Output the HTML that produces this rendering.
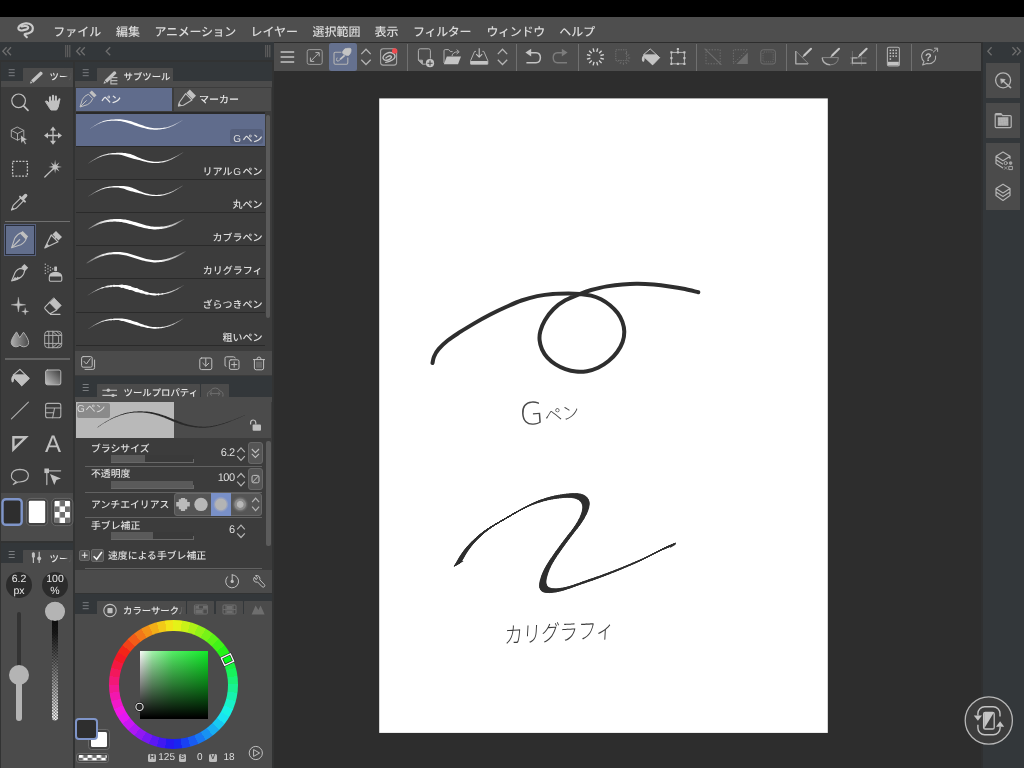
<!DOCTYPE html>
<html lang="ja">
<head>
<meta charset="utf-8">
<title>CLIP STUDIO PAINT</title>
<style>
html,body{margin:0;padding:0;background:#2d2d2d;}
body{-webkit-font-smoothing:antialiased;text-rendering:geometricPrecision;width:1024px;height:768px;overflow:hidden;position:relative;font-family:"Liberation Sans","Noto Sans CJK JP",sans-serif;font-size:10px;font-weight:500;color:#d8d8d8;line-height:1;}
div,span,b,i{position:absolute;box-sizing:border-box;white-space:nowrap;display:block;font-style:normal;font-weight:inherit;}
svg{position:absolute;left:0;top:0;overflow:visible;}
#app{left:0;top:0;width:1024px;height:768px;will-change:transform;}
#status{left:0;top:0;width:1024px;height:17px;background:#000;}
#menubar{left:0;top:17px;width:1024px;height:25px;background:#4e4e4e;}
#menubar span{top:7px;font-size:12px;color:#dadada;line-height:16px;}
#leftdock{left:0;top:42px;width:274px;height:726px;background:#323333;}
.tb{background:#33373a;}
#rightdock{left:981px;top:42px;width:43px;height:726px;background:#33373a;border-left:2px solid #2f3031;}
#cmdbar{left:274px;top:43px;width:707px;height:28px;background:#4d4d4d;}
#work{left:274px;top:71px;width:707px;height:697px;background:#2d2d2d;}
#canvas{left:380px;top:99px;width:447px;height:633px;background:#fff;}
.pal{background:#3c3c3c;}
.tab{background:#4b4b4b;border-radius:0.5px 0.5px 0 0;color:#dcdcdc;height:14px;overflow:hidden;}
.tab span{left:26.6px;top:2.4px;font-size:9.4px;line-height:14px;color:#e4e4e4;}
.strip{background:#4b4b4b;}
em{font-style:normal;margin:0 1.6px 0 0.8px;}
.fade{right:0;top:0;width:9px;height:14px;background:linear-gradient(to right,rgba(75,75,75,0),rgba(75,75,75,0.85) 45%,#4b4b4b 90%);}
.row{left:76px;width:189px;height:32.3px;background:#3c3c3c;}
.row b{right:2.4px;bottom:-1.4px;font-size:10px;color:#dedede;line-height:14px;}
.lbl{font-size:9.85px;color:#dedede;line-height:14px;left:91px;}
.val{font-size:11px;letter-spacing:-0.5px;color:#dedede;line-height:14px;text-align:right;width:40px;left:194.6px;}
.sl{left:111px;width:82.8px;height:7.6px;background:#3a3a3a;border-bottom:1px solid #686868;}
.sl:after{content:'';position:absolute;right:0;bottom:0;width:1px;height:3px;background:#686868;}
.sl i{left:0;top:0;height:6.8px;background:#5a5a5a;}
.btn{background:#555;border-radius:3px;border:1px solid #686868;}
.sep{height:1px;background:#626262;left:85px;width:177px;}
.hsv{font-size:7px;font-weight:bold;color:#4b4b4b;background:#bcbcbc;border-radius:1.5px;width:7.6px;height:7.6px;line-height:7.8px;text-align:center;top:754px;}
.hv{font-size:10px;color:#dedede;line-height:14px;top:751.4px;text-align:right;width:30px;}
</style>
</head>
<body>
<div id="app">
<div id="status"></div>
<div id="menubar"><span style="left:53.3px">ファイル</span><span style="left:116px">編集</span><span style="left:154.6px;letter-spacing:-0.3px">アニメーション</span><span style="left:250.4px">レイヤー</span><span style="left:312.4px">選択範囲</span><span style="left:374.4px">表示</span><span style="left:413px;letter-spacing:-0.3px">フィルター</span><span style="left:486.4px;letter-spacing:-0.3px">ウィンドウ</span><span style="left:559.2px">ヘルプ</span></div>
<div id="leftdock"></div>
<div id="rightdock"></div>
<div id="cmdbar"></div>
<div id="work"></div>
<div class="tb" style="left:0;top:42px;width:274px;height:18.2px;"></div><div class="tb" style="left:0.8px;top:62px;width:72.2px;height:20px;"></div><div class="tb" style="left:0.8px;top:543.4px;width:72.2px;height:20px;"></div><div class="tb" style="left:75px;top:62px;width:197.2px;height:20px;"></div><div class="tb" style="left:75px;top:376.4px;width:197.2px;height:21px;"></div><div class="tb" style="left:75px;top:594.4px;width:197.2px;height:20px;"></div>
<div class="pal" style="left:1px;top:81px;width:72px;height:460px;"></div>
<div class="strip" style="left:1px;top:81px;width:72px;height:6px;"></div>
<div class="strip" style="left:1px;top:493px;width:72px;height:48px;"></div>
<div class="tab" style="left:23px;top:68px;width:50px;"><span>ツール</span><i class="fade"></i></div>
<div class="sep" style="left:5px;top:221px;width:65px;height:1px;background:#707070;"></div>
<div class="sep" style="left:5px;top:358px;width:65px;height:2px;background:#646464;"></div>
<div style="left:4px;top:224px;width:32px;height:32px;background:#626e8c;border:1px solid #57617d;box-shadow:inset 0 0 0 1px #2a2e3a;"></div>
<div class="pal" style="left:1px;top:563px;width:72px;height:205px;background:#4b4b4b;"></div>
<div class="tab" style="left:23px;top:550px;width:50px;"><span>ツール</span><i class="fade"></i></div>
<div style="left:6px;top:571.5px;width:26px;height:26px;border-radius:13px;background:#2b2b2b;"></div><div style="left:42px;top:571.5px;width:26px;height:26px;border-radius:13px;background:#2b2b2b;"></div>
<div style="left:4px;top:574.2px;width:30px;text-align:center;font-size:10.5px;line-height:11.4px;color:#e8e8e8;white-space:normal;">6.2<br>px</div><div style="left:40px;top:574.2px;width:30px;text-align:center;font-size:10.5px;line-height:11.4px;color:#e8e8e8;white-space:normal;">100<br>%</div>
<div style="left:17px;top:612px;width:4px;height:65px;background:#333;border-radius:2px;"></div><div style="left:16px;top:675px;width:6px;height:46px;background:#b4b4b4;border-radius:3px;"></div><div style="left:9.4px;top:665.4px;width:19.2px;height:19.2px;border-radius:10px;background:#b4b4b4;"></div>
<div style="left:45.4px;top:601.7px;width:19.2px;height:19.2px;border-radius:10px;background:#b4b4b4;"></div>
<div class="pal" style="left:75px;top:81px;width:197px;height:295px;"></div>
<div class="strip" style="left:75px;top:81px;width:197px;height:6px;"></div>
<div class="tab" style="left:97px;top:68px;width:76px;"><span>サブツール</span></div>
<div style="left:76px;top:88px;width:96px;height:22.5px;background:#606c8c;"><span style="left:25px;top:5.6px;font-size:10px;line-height:14px;color:#e8e8e8;">ペン</span></div>
<div style="left:174px;top:88px;width:97px;height:22.5px;background:#4b4b4b;"><span style="left:25px;top:5.6px;font-size:10px;line-height:14px;color:#e8e8e8;">マーカー</span></div>
<div style="left:76px;top:112px;width:189px;height:234px;background:#2a2a2a;"></div>
<div class="row" style="top:114px;height:32px;background:#606c8c;"><i style="right:2px;bottom:2px;width:33px;height:15px;border-radius:3px;background:#545e7a;"></i><b><em>G</em>ペン</b></div>
<div class="row" style="top:147px;height:32px;"><b>リアル<em>G</em>ペン</b></div>
<div class="row" style="top:180px;height:32px;"><b>丸ペン</b></div>
<div class="row" style="top:213px;height:32px;"><b>カブラペン</b></div>
<div class="row" style="top:246px;height:32px;"><b>カリグラフィ</b></div>
<div class="row" style="top:279px;height:33px;"><b>ざらつきペン</b></div>
<div class="row" style="top:313px;height:32px;"><b>粗いペン</b></div>
<div style="left:266.3px;top:114.5px;width:3.8px;height:203.6px;background:#5a5a5a;border-radius:2px;"></div>
<div class="strip" style="left:75px;top:351px;width:197px;height:24px;"></div>
<div class="pal" style="left:75px;top:396.5px;width:197px;height:196.5px;"></div>
<div class="tab" style="left:97px;top:383.5px;width:103px;"><span>ツールプロパティ</span></div>
<div class="tab" style="left:201.3px;top:383.5px;width:27.3px;"></div>
<div class="strip" style="left:75px;top:396.5px;width:197px;height:5.5px;"></div>
<div style="left:76px;top:402px;width:97.6px;height:35.8px;background:#b9b9b9;"></div><div style="left:173.6px;top:402px;width:97.4px;height:35.8px;background:#4b4b4b;"></div><div style="left:77px;top:403.4px;width:32.8px;height:14.4px;background:#8a8a8a;border-radius:2px;color:#dcdcdc;font-size:10px;font-weight:400;line-height:13px;padding-left:0;"><em style="margin:0 0.6px 0 0">G</em>ペン</div>
<div class="lbl" style="top:442.8px;">ブラシサイズ</div><div class="sl" style="top:455px;"><i style="width:34px"></i></div><div class="val" style="top:445.8px;">6.2</div><div class="btn" style="left:248.4px;top:442px;width:14.2px;height:22.3px;"></div><div class="sep" style="top:466px;"></div>
<div class="lbl" style="top:468.3px;">不透明度</div><div class="sl" style="top:481px;"><i style="width:82px"></i></div><div class="val" style="top:471.4px;">100</div><div class="btn" style="left:248.4px;top:468.2px;width:14.2px;height:21.5px;"></div><div class="sep" style="top:491.5px;"></div>
<div class="lbl" style="top:499px;">アンチエイリアス</div><div class="btn" style="left:174px;top:493.2px;width:88.4px;height:22.5px;"></div><div style="left:211px;top:493px;width:20px;height:23px;background:#7990c8;"></div><div class="sep" style="top:517px;"></div>
<div class="lbl" style="top:519.8px;">手ブレ補正</div><div class="sl" style="top:532px;"><i style="width:41.7px"></i></div><div class="val" style="top:523px;">6</div>
<div class="btn" style="left:79.4px;top:550.3px;width:11.1px;height:10.4px;border-radius:2px;"></div><div class="btn" style="left:91px;top:548.7px;width:13.2px;height:13.7px;border-radius:2px;"></div><div class="lbl" style="left:108px;top:550.2px;">速度による手ブレ補正</div><div class="sep" style="top:568px;"></div>
<div style="left:266.4px;top:441px;width:4.4px;height:105px;background:#5c5c5c;border-radius:2px;"></div>
<div class="strip" style="left:75px;top:569.6px;width:197px;height:23.4px;"></div>
<div class="pal" style="left:75px;top:614px;width:197px;height:154px;background:#4b4b4b;"></div>
<div class="tab" style="left:97px;top:601.4px;width:88.7px;"><span style="left:26px">カラーサークル</span><i class="fade"></i></div>
<div class="tab" style="left:187.2px;top:601.4px;width:26.8px;"></div><div class="tab" style="left:215.5px;top:601.4px;width:27.5px;"></div><div class="tab" style="left:244.3px;top:601.4px;width:27.7px;"></div>
<div style="left:108.7px;top:620.1px;width:129.4px;height:129.4px;border-radius:50%;background:conic-gradient(from -60deg,#f22518 0.0deg 7.5deg,#f24118 7.5deg 15.0deg,#f25c18 15.0deg 22.5deg,#f27718 22.5deg 30.0deg,#f29218 30.0deg 37.5deg,#f2ae18 37.5deg 45.0deg,#f2c918 45.0deg 52.5deg,#f2e418 52.5deg 60.0deg,#e4f218 60.0deg 67.5deg,#c9f218 67.5deg 75.0deg,#aef218 75.0deg 82.5deg,#92f218 82.5deg 90.0deg,#77f218 90.0deg 97.5deg,#5cf218 97.5deg 105.0deg,#41f218 105.0deg 112.5deg,#25f218 112.5deg 120.0deg,#18f225 120.0deg 127.5deg,#18f241 127.5deg 135.0deg,#18f25c 135.0deg 142.5deg,#18f277 142.5deg 150.0deg,#18f292 150.0deg 157.5deg,#18f2ae 157.5deg 165.0deg,#18f2c9 165.0deg 172.5deg,#18f2e4 172.5deg 180.0deg,#18e4f2 180.0deg 187.5deg,#18c9f2 187.5deg 195.0deg,#18aef2 195.0deg 202.5deg,#1892f2 202.5deg 210.0deg,#1877f2 210.0deg 217.5deg,#185cf2 217.5deg 225.0deg,#1841f2 225.0deg 232.5deg,#1825f2 232.5deg 240.0deg,#2518f2 240.0deg 247.5deg,#4118f2 247.5deg 255.0deg,#5c18f2 255.0deg 262.5deg,#7718f2 262.5deg 270.0deg,#9218f2 270.0deg 277.5deg,#ae18f2 277.5deg 285.0deg,#c918f2 285.0deg 292.5deg,#e418f2 292.5deg 300.0deg,#f218e4 300.0deg 307.5deg,#f218c9 307.5deg 315.0deg,#f218ae 315.0deg 322.5deg,#f21892 322.5deg 330.0deg,#f21877 330.0deg 337.5deg,#f2185c 337.5deg 345.0deg,#f21841 345.0deg 352.5deg,#f21825 352.5deg 360.0deg);"></div><div style="left:119.2px;top:630.6px;width:108.4px;height:108.4px;border-radius:50%;background:#4b4b4b;"></div>
<div style="left:140px;top:651px;width:67.7px;height:67.8px;background:linear-gradient(to bottom,rgba(0,0,0,0.02),rgba(0,0,0,0.5) 50%,#000 98%),linear-gradient(to right,#fff,#a4f7ad 18%,#56f267 48%,#12f02a);"></div>
<div style="left:75.4px;top:718px;width:22.2px;height:22px;border-radius:4px;background:#2e2e2e;border:2.2px solid #7f95c9;z-index:3;"></div><div style="left:87.6px;top:728.6px;width:22px;height:21.6px;border-radius:3.5px;background:#454545;border:1px solid #6a6a6a;"><div style="left:2px;top:2px;width:16px;height:15.6px;background:#fff;border-radius:1.5px;"></div></div><div style="left:76px;top:752.6px;width:33.4px;height:10.6px;border-radius:3px;background:#454545;border:1px solid #6a6a6a;"></div>
<div class="hsv" style="left:148.4px;">H</div><div class="hv" style="left:145px;">125</div><div class="hsv" style="left:178.8px;">S</div><div class="hv" style="left:172.5px;">0</div><div class="hsv" style="left:209px;">V</div><div class="hv" style="left:204.5px;">18</div>
<div style="left:986px;top:63.2px;width:34.2px;height:34.5px;background:#4b4b4b;"></div><div style="left:986px;top:103px;width:34.2px;height:34.7px;background:#4b4b4b;"></div><div style="left:986px;top:143px;width:34.2px;height:66.5px;background:#4b4b4b;"></div>
<div style="left:329px;top:43px;width:28px;height:28px;background:#65718f;border-radius:2.5px;"></div>
<div style="left:406.8px;top:44px;width:1px;height:27px;background:#707070;"></div><div style="left:516.0px;top:44px;width:1px;height:27px;background:#707070;"></div><div style="left:578.0px;top:44px;width:1px;height:27px;background:#707070;"></div><div style="left:696.3px;top:44px;width:1px;height:27px;background:#707070;"></div><div style="left:786.1px;top:44px;width:1px;height:27px;background:#707070;"></div><div style="left:875.9px;top:44px;width:1px;height:27px;background:#707070;"></div><div style="left:910.9px;top:44px;width:1px;height:27px;background:#707070;"></div>
<div id="canvas"></div>
<svg width="1024" height="768" viewBox="0 0 1024 768">
<rect x="379.2" y="98.4" width="448.6" height="634.5" fill="#fff"/>
<path d="M432.5 363.0C432.8 361.9 433.0 359.1 434.0 356.7C435.0 354.3 436.4 351.6 438.8 348.9C441.1 346.2 444.4 343.2 448.0 340.3C451.6 337.4 456.2 334.6 460.6 331.7C465.1 328.8 469.8 326.0 474.7 323.1C479.6 320.2 485.1 317.2 490.3 314.5C495.5 311.8 500.8 309.3 506.0 307.0C511.2 304.7 516.3 302.3 521.5 300.5C526.7 298.7 532.0 297.2 537.2 296.1C542.4 295.0 547.6 294.3 552.8 293.9C558.0 293.4 563.9 293.4 568.4 293.4C572.9 293.4 576.2 293.6 580.0 294.0C583.8 294.4 587.8 294.7 591.2 295.6C594.8 296.5 597.9 297.6 601.0 299.2C604.1 300.8 607.2 302.9 610.0 305.2C612.8 307.5 615.5 310.2 617.6 313.0C619.7 315.8 621.3 318.7 622.4 321.8C623.5 324.9 624.3 328.3 624.3 331.7C624.3 335.1 623.8 338.6 622.6 342.0C621.4 345.4 619.5 348.8 617.2 352.0C614.9 355.2 611.8 358.4 608.6 361.0C605.4 363.6 601.6 366.1 598.0 367.8C594.4 369.5 590.7 370.6 587.0 371.2C583.3 371.8 579.6 371.9 576.0 371.6C572.4 371.3 568.8 370.4 565.4 369.2C562.0 368.0 558.6 366.3 555.6 364.4C552.6 362.5 549.7 360.1 547.4 357.6C545.1 355.1 543.3 352.3 542.0 349.4C540.7 346.5 539.9 343.4 539.6 340.3C539.3 337.2 539.5 334.3 540.4 331.0C541.3 327.7 542.6 324.1 544.8 320.4C547.0 316.7 550.2 312.4 553.6 309.0C557.0 305.6 560.8 302.8 565.3 300.3C569.8 297.8 576.0 295.5 580.3 293.8C584.6 292.0 586.8 291.2 591.2 290.0C595.7 288.8 601.7 287.3 606.9 286.4C612.1 285.5 617.3 284.8 622.5 284.4C627.7 284.0 632.8 283.7 638.0 283.8C643.2 283.8 648.5 284.1 653.8 284.5C659.0 284.9 664.2 285.6 669.4 286.4C674.6 287.1 680.2 288.0 685.0 289.0C689.8 290.0 696.1 291.8 698.3 292.3" fill="none" stroke="#2e2e2e" stroke-width="4" stroke-linecap="round" stroke-linejoin="round"/>
<path d="M454.2 566.2L454.3 566.0L460.7 562.4L460.6 562.6ZM454.3 566.0L454.5 565.7L460.9 562.1L460.7 562.4ZM454.5 565.7L454.7 565.4L461.1 561.8L460.9 562.1ZM454.7 565.4L454.9 565.1L461.3 561.5L461.1 561.8ZM454.9 565.1L455.2 564.7L461.6 561.1L461.3 561.5ZM455.2 564.7L455.5 564.2L461.9 560.6L461.6 561.1ZM455.5 564.2L455.8 563.7L462.2 560.1L461.9 560.6ZM455.8 563.7L456.2 563.0L462.6 559.4L462.2 560.1ZM456.2 563.0L456.7 562.2L463.1 558.6L462.6 559.4ZM456.7 562.2L457.2 561.3L463.6 557.7L463.1 558.6ZM457.2 561.3L457.8 560.3L464.2 556.7L463.6 557.7ZM457.8 560.3L458.4 559.2L464.8 555.6L464.2 556.7ZM458.4 559.2L459.0 558.1L465.4 554.5L464.8 555.6ZM459.0 558.1L459.7 557.0L466.1 553.4L465.4 554.5ZM459.7 557.0L460.4 555.9L466.8 552.3L466.1 553.4ZM460.4 555.9L461.1 554.9L467.4 551.3L466.8 552.3ZM461.1 554.9L461.7 553.9L468.1 550.3L467.4 551.3ZM461.7 553.9L462.4 553.0L468.8 549.4L468.1 550.3ZM462.4 553.0L463.1 552.0L469.5 548.4L468.8 549.4ZM463.1 552.0L463.8 551.0L470.2 547.5L469.5 548.4ZM463.8 551.0L464.5 550.1L470.9 546.5L470.2 547.5ZM464.5 550.1L465.2 549.2L471.6 545.6L470.9 546.5ZM465.2 549.2L466.0 548.3L472.4 544.7L471.6 545.6ZM466.0 548.3L466.7 547.4L473.1 543.8L472.4 544.7ZM466.7 547.4L467.4 546.5L473.8 542.9L473.1 543.8ZM467.4 546.5L468.2 545.7L474.6 542.1L473.8 542.9ZM468.2 545.7L469.0 544.9L475.4 541.3L474.6 542.1ZM469.0 544.9L469.8 544.0L476.2 540.4L475.4 541.3ZM469.8 544.0L470.5 543.2L476.9 539.6L476.2 540.4ZM470.5 543.2L471.3 542.4L477.7 538.8L476.9 539.6ZM471.3 542.4L472.1 541.7L478.5 538.1L477.7 538.8ZM472.1 541.7L472.9 540.9L479.3 537.3L478.5 538.1ZM472.9 540.9L473.7 540.1L480.1 536.5L479.3 537.3ZM473.7 540.1L474.5 539.4L480.9 535.8L480.1 536.5ZM474.5 539.4L475.3 538.7L481.7 535.1L480.9 535.8ZM475.3 538.7L476.1 537.9L482.4 534.3L481.7 535.1ZM476.1 537.9L476.8 537.2L483.2 533.6L482.4 534.3ZM476.8 537.2L477.6 536.5L484.0 532.9L483.2 533.6ZM477.6 536.5L478.4 535.9L484.8 532.3L484.0 532.9ZM478.4 535.9L479.2 535.2L485.6 531.6L484.8 532.3ZM479.2 535.2L480.0 534.6L486.4 531.0L485.6 531.6ZM480.0 534.6L480.8 533.9L487.2 530.3L486.4 531.0ZM480.8 533.9L481.5 533.4L487.9 529.8L487.2 530.3ZM481.5 533.4L482.3 532.8L488.7 529.2L487.9 529.8ZM482.3 532.8L483.1 532.2L489.5 528.6L488.7 529.2ZM483.1 532.2L483.8 531.6L490.2 528.0L489.5 528.6ZM483.8 531.6L484.6 531.1L491.0 527.5L490.2 528.0ZM484.6 531.1L485.4 530.5L491.8 527.0L491.0 527.5ZM485.4 530.5L486.2 530.0L492.6 526.4L491.8 527.0ZM486.2 530.0L486.9 529.5L493.3 525.9L492.6 526.4ZM486.9 529.5L487.7 529.0L494.1 525.4L493.3 525.9ZM487.7 529.0L488.5 528.5L494.9 524.9L494.1 525.4ZM488.5 528.5L489.2 528.0L495.6 524.4L494.9 524.9ZM489.2 528.0L490.0 527.5L496.4 523.9L495.6 524.4ZM490.0 527.5L490.9 527.0L497.3 523.4L496.4 523.9ZM490.9 527.0L491.7 526.5L498.1 522.9L497.3 523.4ZM491.7 526.5L492.6 526.0L499.0 522.4L498.1 522.9ZM492.6 526.0L493.5 525.4L499.9 521.8L499.0 522.4ZM493.5 525.4L494.4 524.9L500.8 521.3L499.9 521.8ZM494.4 524.9L495.4 524.3L501.8 520.7L500.8 521.3ZM495.4 524.3L496.3 523.8L502.7 520.2L501.8 520.7ZM496.3 523.8L497.3 523.2L503.7 519.6L502.7 520.2ZM497.3 523.2L498.2 522.7L504.6 519.1L503.7 519.6ZM498.2 522.7L499.2 522.1L505.6 518.5L504.6 519.1ZM499.2 522.1L500.1 521.6L506.5 518.0L505.6 518.5ZM500.1 521.6L501.1 521.0L507.5 517.4L506.5 518.0ZM501.1 521.0L502.0 520.5L508.4 516.9L507.5 517.4ZM502.0 520.5L503.0 519.9L509.4 516.3L508.4 516.9ZM503.0 519.9L503.9 519.4L510.3 515.8L509.4 516.3ZM503.9 519.4L504.9 518.8L511.3 515.2L510.3 515.8ZM504.9 518.8L505.8 518.3L512.2 514.7L511.3 515.2ZM505.8 518.3L506.8 517.7L513.2 514.1L512.2 514.7ZM506.8 517.7L507.7 517.2L514.1 513.6L513.2 514.1ZM507.7 517.2L508.6 516.6L515.0 513.0L514.1 513.6ZM508.6 516.6L509.5 516.1L515.9 512.5L515.0 513.0ZM509.5 516.1L510.3 515.6L516.7 512.0L515.9 512.5ZM510.3 515.6L511.3 515.0L517.7 511.4L516.7 512.0ZM511.3 515.0L512.3 514.4L518.7 510.8L517.7 511.4ZM518.7 510.8L519.9 510.2L513.5 513.8L512.3 514.4ZM519.9 510.2L521.3 509.4L514.9 513.0L513.5 513.8ZM521.3 509.4L522.9 508.6L516.5 512.2L514.9 513.0ZM522.9 508.6L524.7 507.6L518.3 511.2L516.5 512.2ZM524.7 507.6L526.6 506.6L520.2 510.2L518.3 511.2ZM526.6 506.6L528.7 505.5L522.3 509.1L520.2 510.2ZM528.7 505.5L530.7 504.5L524.3 508.1L522.3 509.1ZM530.7 504.5L532.9 503.4L526.5 507.0L524.3 508.1ZM532.9 503.4L534.9 502.5L528.5 506.1L526.5 507.0ZM534.9 502.5L537.0 501.6L530.5 505.2L528.5 506.1ZM537.0 501.6L538.9 500.8L532.5 504.4L530.5 505.2ZM538.9 500.8L540.9 500.1L534.5 503.7L532.5 504.4ZM540.9 500.1L542.8 499.4L536.4 503.0L534.5 503.7ZM542.8 499.4L544.8 498.8L538.4 502.4L536.4 503.0ZM544.8 498.8L546.7 498.2L540.3 501.8L538.4 502.4ZM546.7 498.2L548.7 497.6L542.3 501.2L540.3 501.8ZM548.7 497.6L550.6 497.1L544.2 500.7L542.3 501.2ZM550.6 497.1L552.6 496.6L546.2 500.2L544.2 500.7ZM552.6 496.6L554.6 496.1L548.2 499.7L546.2 500.2ZM554.6 496.1L556.6 495.7L550.2 499.3L548.2 499.7ZM556.6 495.7L558.7 495.3L552.3 498.9L550.2 499.3ZM558.7 495.3L560.7 495.0L554.3 498.6L552.3 498.9ZM560.7 495.0L562.7 494.7L556.3 498.3L554.3 498.6ZM562.7 494.7L564.6 494.4L558.2 498.0L556.3 498.3ZM564.6 494.4L566.5 494.2L560.1 497.8L558.2 498.0ZM566.5 494.2L568.2 494.0L561.8 497.6L560.1 497.8ZM568.2 494.0L569.8 493.9L563.4 497.5L561.8 497.6ZM569.8 493.9L571.4 493.7L565.0 497.3L563.4 497.5ZM571.4 493.7L572.8 493.7L566.4 497.3L565.0 497.3ZM572.8 493.7L574.2 493.7L567.8 497.3L566.4 497.3ZM574.2 493.7L575.6 493.7L569.2 497.3L567.8 497.3ZM575.6 493.7L576.8 493.7L570.4 497.3L569.2 497.3ZM576.8 493.7L578.0 493.8L571.6 497.4L570.4 497.3ZM578.0 493.8L579.2 494.0L572.8 497.6L571.6 497.4ZM579.2 494.0L580.3 494.2L573.9 497.8L572.8 497.6ZM580.3 494.2L581.3 494.5L574.9 498.1L573.9 497.8ZM581.3 494.5L582.3 494.7L575.9 498.3L574.9 498.1ZM582.3 494.7L583.2 495.1L576.8 498.7L575.9 498.3ZM583.2 495.1L584.0 495.5L577.6 499.1L576.8 498.7ZM584.0 495.5L584.8 495.9L578.4 499.5L577.6 499.1ZM584.8 495.9L585.5 496.4L579.1 500.0L578.4 499.5ZM585.5 496.4L586.2 496.9L579.8 500.6L579.1 500.0ZM586.2 496.9L586.8 497.6L580.4 501.2L579.8 500.6ZM586.8 497.6L587.4 498.2L581.0 501.8L580.4 501.2ZM587.4 498.2L587.8 498.9L581.4 502.5L581.0 501.8ZM587.8 498.9L588.3 499.7L581.9 503.3L581.4 502.5ZM588.3 499.7L588.6 500.5L582.2 504.1L581.9 503.3ZM588.6 500.5L588.9 501.3L582.5 504.9L582.2 504.1ZM588.9 501.3L589.1 502.2L582.7 505.8L582.5 504.9ZM589.1 502.2L589.2 503.2L582.8 506.8L582.7 505.8ZM589.2 503.2L589.2 504.2L582.8 507.8L582.8 506.8ZM589.2 504.2L589.1 505.3L582.7 508.9L582.8 507.8ZM589.1 505.3L588.9 506.4L582.5 510.0L582.7 508.9ZM588.9 506.4L588.7 507.6L582.3 511.2L582.5 510.0ZM588.7 507.6L588.3 508.8L581.9 512.4L582.3 511.2ZM588.3 508.8L587.9 510.1L581.5 513.7L581.9 512.4ZM587.9 510.1L587.5 511.3L581.1 514.9L581.5 513.7ZM587.5 511.3L587.0 512.6L580.5 516.2L581.1 514.9ZM587.0 512.6L586.4 513.9L580.0 517.5L580.5 516.2ZM586.4 513.9L585.7 515.2L579.3 518.8L580.0 517.5ZM585.7 515.2L585.0 516.5L578.6 520.1L579.3 518.8ZM585.0 516.5L584.3 517.9L577.9 521.5L578.6 520.1ZM584.3 517.9L583.5 519.2L577.1 522.8L577.9 521.5ZM583.5 519.2L582.6 520.6L576.2 524.2L577.1 522.8ZM582.6 520.6L581.7 522.1L575.3 525.7L576.2 524.2ZM581.7 522.1L580.7 523.5L574.3 527.1L575.3 525.7ZM580.7 523.5L579.7 525.0L573.3 528.6L574.3 527.1ZM579.7 525.0L578.5 526.5L572.1 530.1L573.3 528.6ZM578.5 526.5L577.4 528.1L571.0 531.7L572.1 530.1ZM577.4 528.1L576.1 529.6L569.7 533.2L571.0 531.7ZM576.1 529.6L574.9 531.2L568.5 534.8L569.7 533.2ZM574.9 531.2L573.6 532.8L567.2 536.4L568.5 534.8ZM573.6 532.8L572.4 534.4L566.0 538.0L567.2 536.4ZM572.4 534.4L571.2 536.0L564.8 539.6L566.0 538.0ZM571.2 536.0L570.0 537.6L563.6 541.2L564.8 539.6ZM570.0 537.6L568.9 539.1L562.5 542.7L563.6 541.2ZM568.9 539.1L567.7 540.6L561.3 544.2L562.5 542.7ZM567.7 540.6L566.6 542.1L560.2 545.7L561.3 544.2ZM566.6 542.1L565.4 543.7L559.0 547.3L560.2 545.7ZM565.4 543.7L564.3 545.3L557.9 548.9L559.0 547.3ZM564.3 545.3L563.1 546.9L556.7 550.5L557.9 548.9ZM563.1 546.9L562.0 548.5L555.5 552.1L556.7 550.5ZM562.0 548.5L560.8 550.2L554.4 553.8L555.5 552.1ZM560.8 550.2L559.5 552.0L553.1 555.6L554.4 553.8ZM559.5 552.0L558.3 553.8L551.9 557.4L553.1 555.6ZM558.3 553.8L557.0 555.6L550.6 559.2L551.9 557.4ZM557.0 555.6L555.8 557.5L549.4 561.1L550.6 559.2ZM555.8 557.5L554.6 559.3L548.2 562.9L549.4 561.1ZM554.6 559.3L553.6 561.0L547.2 564.6L548.2 562.9ZM553.6 561.0L552.6 562.6L546.2 566.2L547.2 564.6ZM552.6 562.6L551.8 564.1L545.4 567.7L546.2 566.2ZM551.8 564.1L551.0 565.6L544.6 569.2L545.4 567.7ZM551.0 565.6L550.3 567.0L543.9 570.6L544.6 569.2ZM550.3 567.0L549.7 568.3L543.3 571.9L543.9 570.6ZM549.7 568.3L549.1 569.7L542.7 573.3L543.3 571.9ZM549.1 569.7L548.6 571.0L542.2 574.6L542.7 573.3ZM548.6 571.0L548.1 572.2L541.7 575.8L542.2 574.6ZM548.1 572.2L547.7 573.5L541.3 577.1L541.7 575.8ZM547.7 573.5L547.3 574.8L540.9 578.4L541.3 577.1ZM547.3 574.8L546.9 576.1L540.5 579.7L540.9 578.4ZM546.9 576.1L546.6 577.3L540.2 580.9L540.5 579.7ZM546.6 577.3L546.3 578.6L539.9 582.2L540.2 580.9ZM546.3 578.6L546.1 579.8L539.7 583.4L539.9 582.2ZM546.1 579.8L546.0 580.9L539.6 584.5L539.7 583.4ZM546.0 580.9L545.9 581.9L539.5 585.5L539.6 584.5ZM545.9 581.9L546.0 582.9L539.6 586.5L539.5 585.5ZM546.0 582.9L546.1 583.8L539.7 587.4L539.6 586.5ZM546.1 583.8L546.4 584.6L540.0 588.2L539.7 587.4ZM546.4 584.6L546.7 585.3L540.3 588.9L540.0 588.2ZM546.7 585.3L547.0 586.0L540.6 589.6L540.3 588.9ZM547.0 586.0L547.5 586.6L541.1 590.2L540.6 589.6ZM547.5 586.6L548.1 587.1L541.7 590.7L541.1 590.2ZM548.1 587.1L548.7 587.6L542.3 591.2L541.7 590.7ZM548.7 587.6L549.5 588.0L543.0 591.6L542.3 591.2ZM549.5 588.0L550.3 588.3L543.9 591.9L543.0 591.6ZM550.3 588.3L551.3 588.6L544.9 592.2L543.9 591.9ZM551.3 588.6L552.4 588.7L546.0 592.3L544.9 592.2ZM552.4 588.7L553.6 588.8L547.2 592.4L546.0 592.3ZM553.6 588.8L554.8 588.9L548.4 592.5L547.2 592.4ZM554.8 588.9L556.1 588.9L549.7 592.5L548.4 592.5ZM556.1 588.9L557.4 588.8L551.0 592.4L549.7 592.5ZM557.4 588.8L558.8 588.7L552.4 592.3L551.0 592.4ZM558.8 588.7L560.2 588.5L553.8 592.1L552.4 592.3ZM560.2 588.5L561.6 588.3L555.2 591.9L553.8 592.1ZM561.6 588.3L563.1 588.1L556.7 591.7L555.2 591.9ZM563.1 588.1L564.6 587.7L558.2 591.3L556.7 591.7ZM564.6 587.7L566.2 587.4L559.8 591.0L558.2 591.3ZM566.2 587.4L567.8 587.0L561.4 590.6L559.8 591.0ZM567.8 587.0L569.5 586.5L563.1 590.1L561.4 590.6ZM569.5 586.5L571.2 586.0L564.8 589.6L563.1 590.1ZM571.2 586.0L573.0 585.4L566.6 589.0L564.8 589.6ZM573.0 585.4L574.9 584.8L568.5 588.4L566.6 589.0ZM574.9 584.8L576.9 584.1L570.5 587.7L568.5 588.4ZM576.9 584.1L578.9 583.4L572.5 587.0L570.5 587.7ZM578.9 583.4L580.9 582.7L574.5 586.3L572.5 587.0ZM580.9 582.7L582.9 581.9L576.5 585.5L574.5 586.3ZM582.9 581.9L585.0 581.2L578.6 584.8L576.5 585.5ZM585.0 581.2L587.0 580.5L580.5 584.1L578.6 584.8ZM587.0 580.5L588.9 579.8L582.5 583.4L580.5 584.1ZM588.9 579.8L590.8 579.2L584.4 582.8L582.5 583.4ZM590.8 579.2L592.7 578.5L586.3 582.1L584.4 582.8ZM592.7 578.5L594.6 577.9L588.2 581.5L586.3 582.1ZM594.6 577.9L596.5 577.2L590.1 580.8L588.2 581.5ZM596.5 577.2L598.5 576.6L592.1 580.2L590.1 580.8ZM598.5 576.6L600.5 575.9L594.1 579.5L592.1 580.2ZM600.5 575.9L602.6 575.1L596.2 578.7L594.1 579.5ZM602.6 575.1L604.7 574.3L598.3 577.9L596.2 578.7ZM604.7 574.3L606.9 573.5L600.5 577.1L598.3 577.9ZM606.9 573.5L609.1 572.7L602.7 576.3L600.5 577.1ZM609.1 572.7L611.4 571.8L605.0 575.4L602.7 576.3ZM611.4 571.8L613.7 571.0L607.3 574.6L605.0 575.4ZM613.7 571.0L616.1 570.0L609.7 573.6L607.3 574.6ZM616.1 570.0L618.6 569.0L612.2 572.6L609.7 573.6ZM618.6 569.0L621.2 568.0L614.8 571.6L612.2 572.6ZM621.2 568.0L623.9 566.9L617.5 570.5L614.8 571.6ZM623.9 566.9L626.8 565.7L620.4 569.3L617.5 570.5ZM626.8 565.7L629.8 564.4L623.4 568.0L620.4 569.3ZM629.8 564.4L632.9 563.1L626.5 566.7L623.4 568.0ZM632.9 563.1L636.0 561.8L629.6 565.4L626.5 566.7ZM636.0 561.8L639.0 560.5L632.6 564.1L629.6 565.4ZM639.0 560.5L642.0 559.2L635.6 562.8L632.6 564.1ZM642.0 559.2L644.8 557.9L638.4 561.5L635.6 562.8ZM644.8 557.9L647.6 556.6L641.2 560.2L638.4 561.5ZM647.6 556.6L650.3 555.2L643.9 558.8L641.2 560.2ZM650.3 555.2L653.1 553.8L646.7 557.4L643.9 558.8ZM653.1 553.8L655.8 552.5L649.4 556.1L646.7 557.4ZM655.8 552.5L658.3 551.1L651.9 554.7L649.4 556.1ZM658.3 551.1L660.8 549.9L654.4 553.5L651.9 554.7ZM660.8 549.9L663.0 548.7L656.6 552.3L654.4 553.5ZM663.0 548.7L665.1 547.7L658.7 551.3L656.6 552.3ZM665.1 547.7L667.0 546.8L660.6 550.4L658.7 551.3ZM667.0 546.8L668.7 546.0L662.3 549.6L660.6 550.4ZM668.7 546.0L670.3 545.4L663.9 549.0L662.3 549.6ZM670.3 545.4L671.7 544.8L665.3 548.4L663.9 549.0ZM671.7 544.8L673.0 544.2L666.6 547.8L665.3 548.4ZM673.0 544.2L674.1 543.8L667.7 547.4L666.6 547.8ZM674.1 543.8L675.0 543.4L668.6 547.0L667.7 547.4ZM675.0 543.4L675.8 543.1L669.4 546.7L668.6 547.0Z" fill="#2e2e2e" stroke="#2e2e2e" stroke-width="0.9" stroke-linejoin="round"/>
<path d="M459.4 563.4L463.6 561.3L461 560.4ZM668.4 545.8L675.8 543L675.5 544.7L670.4 547.7Z" fill="#2e2e2e"/>
<text x="519.4" y="424.6" font-family="'DejaVu Sans','Liberation Sans',sans-serif" font-weight="200" font-size="31" fill="#4a4a4a" transform="rotate(-4 530 414)">G</text>
<text x="544.5" y="420.4" font-family="'Liberation Sans','Noto Sans CJK JP',sans-serif" font-weight="200" font-size="17.5" fill="#444" transform="rotate(-8 560 414)">ペン</text>
<text x="0" y="0" font-family="'Liberation Sans','Noto Sans CJK JP',sans-serif" font-weight="200" font-size="18.4" fill="#3c3c3c" transform="translate(504 643.4) rotate(-3) skewX(-6) scale(1 1.22)">カリグラフィ</text>
<g fill="none" stroke="#c0c0c0" stroke-width="1.2" stroke-linecap="round" stroke-linejoin="round">
<circle cx="18.6" cy="100.8" r="6.8"/><path d="M23.6 105.8L28 110.3" stroke-width="1.7"/>
<path d="M50 103V97.2M53 102V95.8M55.9 102.5V96.6M58 104L59.4 99.2" stroke-width="2.1"/><path d="M45.6 101.2Q46.6 100.4 48 101.8L50 104.2V101H58.6L59 103Q58.6 107.5 56.6 110H51Q49.6 108.4 48.6 106.6Z" fill="#c0c0c0" stroke-width="1"/>
<path d="M17.5 127.2L23.8 130.4V137L17.5 140.2L11.3 137V130.4ZM11.3 130.4L17.5 133.6L23.8 130.4M17.5 133.6V140.2" stroke-width="1" stroke="#a8a8a8"/>
<path d="M20.8 135.2L27.4 139.6L24.6 140.4L26.4 143.8L24.9 144.6L23.1 141.2L21.1 143.3Z" fill="#c0c0c0" stroke="#3c3c3c" stroke-width="0.6"/>
<path d="M53 129V142M46.5 135.5H59.5" stroke-width="1.3"/><path d="M53 126.4L56 130.4H50ZM53 144.8L56 140.8H50ZM44 135.5L48 132.5V138.5ZM62 135.5L58 132.5V138.5Z" fill="#c0c0c0" stroke="none"/>
<rect x="12.6" y="161.3" width="14.8" height="14.8" stroke-dasharray="2 1.3" stroke-linecap="butt" stroke-width="1.3"/>
<path d="M44.8 177L53.6 168.4" stroke-width="1.3"/>
<path d="M55.1 159.8L55.9 164.9L59.4 162.3L57.2 166.1L62 166.9L57.2 167.7L59.4 171.5L55.9 168.9L55.1 173.6L54.3 168.9L50.8 171.5L53 167.7L48.4 166.9L53 166.1L50.8 162.3L54.3 164.9Z" fill="#c0c0c0" stroke="none"/>
<path d="M11.5 210.1L13.2 205.4L20.8 197.8L23.7 200.7L16.1 208.3Z" stroke-width="1.1"/><path d="M11.3 210.3L12.6 207.2L14.4 209Z" fill="#c0c0c0" stroke="none"/>
<path d="M20 196.6L25 201.6" stroke-width="2"/><path d="M23 198.2L25.6 195.6" stroke-width="3.6"/>
<path d="M11.6 247.8L14.6 238.6Q17 234.2 21.6 232.6L26.6 237.6Q25.2 242.4 20.8 244.8Z" stroke-width="1.1"/><path d="M12 247.4L19.6 239.8" stroke-width="1.3"/><path d="M22.6 231L28.2 236.6L25.6 239.2L20 233.6Z" fill="#c0c0c0" stroke="none"/>
<path d="M44.8 248L51.2 235L58 241.8Z" stroke-width="1.2"/><path d="M44.8 248L47 243.6L49.2 245.8Z" fill="#c0c0c0" stroke="none"/><path d="M52.4 234.6L56 231L62 237L58.4 240.6L56.6 238.2L55.4 239L54.6 236.4Z" fill="#c0c0c0" stroke="none"/>
<path d="M11.6 281L14.4 274.2Q15.4 270.2 19.8 268.4Q23.2 268.4 24.6 270.2Q24.4 274.4 21 277.2Q16.4 280.4 11.6 281Z" stroke-width="1.1"/><path d="M11.6 281L15 277L16.4 278L17.8 276.6L19 277.8L20.4 276.4L21.4 277.2Q16.8 280.6 11.6 281Z" fill="#c0c0c0" stroke="none"/><path d="M21.2 267.2L24.4 264L28.2 267.8L25 271Z" fill="#c0c0c0" stroke="none"/>
<path d="M50.4 281.2Q49.3 281.2 49.3 280V277Q49.6 272.6 55.6 272.4Q61.6 272.6 61.8 277V280Q61.8 281.2 60.7 281.2Z" stroke-width="1.1"/><rect x="50.6" y="277.4" width="9.9" height="2" fill="#3c3c3c" stroke="none"/><path d="M49.5 276.6Q50 272.8 55.6 272.6Q61.2 272.8 61.6 276.6Z" fill="#c0c0c0" stroke="none"/><rect x="54.2" y="266.4" width="2.8" height="4.6" rx="0.6" fill="#c0c0c0" stroke="none"/>
<g fill="#a8a8a8" stroke="none"><rect x="44.7" y="263.6" width="1.3" height="1.3"/><rect x="44.7" y="266.8" width="1.3" height="1.3"/><rect x="44.7" y="269.8" width="1.3" height="1.3"/><rect x="44.7" y="272.8" width="1.3" height="1.3"/><rect x="47.3" y="265.2" width="1.3" height="1.3"/><rect x="47.3" y="268.2" width="1.3" height="1.3"/><rect x="47.3" y="271.2" width="1.3" height="1.3"/><rect x="49.8" y="266.8" width="1.3" height="1.3"/><rect x="49.8" y="269.6" width="1.3" height="1.3"/><rect x="52" y="268.2" width="1.3" height="1.3"/></g>
<path d="M18.4 297.6L19.45 303.75L25.6 304.8L19.45 305.85L18.4 312.0L17.35 305.85L11.2 304.8L17.35 303.75Z" fill="#c0c0c0" stroke="#c0c0c0" stroke-width="0.4" stroke-linejoin="round"/><path d="M25.2 308.0L25.95 310.75L28.7 311.5L25.95 312.25L25.2 315.0L24.45 312.25L21.7 311.5L24.45 310.75Z" fill="#c0c0c0" stroke="#c0c0c0" stroke-width="0.3" stroke-linejoin="round"/>
<path d="M54 298L61.2 305.4L56.6 310L49.4 302.6Z" fill="#c0c0c0" stroke="#c0c0c0" stroke-width="0.8"/><path d="M49.4 302.6L45.2 306.8Q44.2 308 45.2 309.2L49 313Q50.2 314 51.4 313L56.6 310" stroke-width="1.1"/><path d="M50.4 314.3H60" stroke-width="1.2"/>
<defs><linearGradient id="gb" x1="0" x2="1" y1="0" y2="0"><stop offset="0" stop-color="#b0b0b0"/><stop offset="1" stop-color="#4a4a4a"/></linearGradient></defs>
<path d="M16.3 332.2Q11.2 339 11.2 342.4Q11.6 346.6 16 346.8Q18.6 346.8 19.9 345Q21.2 346.8 23.8 346.8Q28.4 346.6 28.6 342.4Q28.6 339 23.5 332.2L19.9 337.4Z" fill="url(#gb)" stroke="#b0b0b0" stroke-width="1"/>
<g stroke="#ababab" stroke-width="1"><rect x="44.7" y="331.3" width="17" height="16.4" rx="3"/><path d="M48.8 331.3V347.7M52.8 331.3V347.7M44.7 335.4H61.7M44.7 343.4H61.7M52.8 331.6L58.6 336.6V342.4L52.8 347.4M56.4 331.4L61.6 335.6M56.4 347.6L61.6 343.4"/></g>
<path d="M13.4 374.8L19.9 369.3L29.1 378.4L21.7 385.6Z" stroke-width="1.1"/><path d="M13.6 374.8H25.6L29.1 378.4L21.7 385.6L14 378Z" fill="#c0c0c0" stroke="#c0c0c0" stroke-width="0.8"/><path d="M14.6 374.6Q11.4 375.6 11.2 379.6Q11.4 382.4 12.6 382.4Q13.8 382.4 14 380V376Z" fill="#c0c0c0" stroke="none"/>
<defs><linearGradient id="gg" x1="0" x2="1" y1="1" y2="0"><stop offset="0" stop-color="#c4c4c4"/><stop offset="1" stop-color="#3a3a3a"/></linearGradient></defs>
<rect x="45.6" y="370" width="15.2" height="14.8" rx="1.8" fill="url(#gg)" stroke="#b8b8b8" stroke-width="1"/>
<path d="M11.4 418.9L28.4 402.1" stroke-width="1.1" stroke="#b0b0b0"/>
<g stroke="#b0b0b0" stroke-width="1.1"><rect x="45.6" y="403.4" width="15.2" height="14.4" rx="2"/><path d="M45.6 408H60.8M45.6 412.7H53.8M54.6 408L52.6 417.8"/></g>
<path d="M12.2 436H28.8L12.2 452.3ZM14.6 438.4V446.6L23 438.4Z" fill="#c0c0c0" fill-rule="evenodd" stroke="none"/>
<path d="M16.2 481.4Q11.2 479.6 11.4 475.6Q12 469.6 19.9 469.4Q28 469.6 28.4 475.6Q28 481.4 19.6 482Q18.4 482 18 482L13.2 484.6Z" stroke-width="1.1" stroke="#b8b8b8"/>
<path d="M46.8 471V484.6M48 470.8H60.6" stroke-width="1.3" stroke="#b0b0b0"/><rect x="44.4" y="468.5" width="4.6" height="4.6" fill="#c0c0c0" stroke="none"/><path d="M50 474L61 478.4L56.4 480L54.3 485Z" fill="#c0c0c0" stroke="none"/>
</g>
<text x="53.1" y="452.3" text-anchor="middle" font-family="'Liberation Sans',sans-serif" font-size="24" fill="#c0c0c0">A</text>
<rect x="2.5" y="499.2" width="19.2" height="25.6" rx="3.4" fill="#2e2e2e" stroke="#7f95c9" stroke-width="2.4"/>
<rect x="26.4" y="498.4" width="21.3" height="27.2" rx="4.4" fill="#434343" stroke="#6c6c6c" stroke-width="0.9"/><rect x="28.8" y="500.8" width="16.4" height="22.3" rx="1.4" fill="#fff"/>
<rect x="51.7" y="498.4" width="21.2" height="27.2" rx="4.4" fill="#434343" stroke="#6c6c6c" stroke-width="0.9"/>
<defs><pattern id="ck" x="54.4" y="500.8" width="10.6" height="11.2" patternUnits="userSpaceOnUse"><rect width="10.6" height="11.2" fill="#fff"/><rect x="5.3" width="5.3" height="5.6" fill="#707070"/><rect y="5.6" width="5.3" height="5.6" fill="#707070"/></pattern></defs>
<rect x="54.4" y="500.8" width="15.8" height="22.3" rx="1.4" fill="url(#ck)"/>
<path d="M21.6 26.5C22.1 26.4 23.5 26.1 24.4 26.0C25.3 26.0 26.3 25.9 27.0 26.2C27.6 26.5 28.3 27.2 28.2 27.7C28.2 28.2 27.5 28.9 26.8 29.3C26.0 29.7 24.5 30.0 23.5 30.2C22.4 30.4 21.4 30.7 20.6 30.4C19.7 30.2 18.8 29.5 18.5 28.9C18.2 28.2 18.4 27.3 18.9 26.6C19.4 25.8 20.4 25.0 21.6 24.4C22.7 23.9 24.6 23.5 25.8 23.4C27.1 23.3 28.1 23.4 29.1 23.7C30.1 24.1 31.3 24.8 31.9 25.6C32.5 26.4 32.9 27.4 32.8 28.4C32.8 29.4 32.4 30.7 31.7 31.5C31.0 32.3 29.8 32.8 28.6 33.2C27.4 33.7 24.8 33.7 24.5 34.4C24.2 35.0 26.4 36.7 26.8 37.2" fill="none" stroke="#cccccc" stroke-width="2.2" stroke-linecap="round" stroke-linejoin="round"/>
<g fill="none" stroke="#6e6e6e" stroke-width="1.3">
<path d="M6.6 47.2L2.8 51.2L6.6 55.2M11 47.2L7.2 51.2L11 55.2"/>
<path d="M65.7 45V57.2M67.6 45V57.2M69.8 45V57.2" stroke="#5e5e5e" stroke-width="1.2"/>
<path d="M80.4 47.2L76.6 51.2L80.4 55.2M84.8 47.2L81 51.2L84.8 55.2"/>
<path d="M110.2 47.2L106.2 51.2L110.2 55.2"/>
<path d="M265.7 45V57.2M267.6 45V57.2M269.8 45V57.2" stroke="#5e5e5e" stroke-width="1.2"/>
<path d="M991.6 47.2L987.8 51.2L991.6 55.2"/>
<path d="M1012.4 47.2L1016.2 51.2L1012.4 55.2M1016.8 47.2L1020.6 51.2L1016.8 55.2"/>
</g>
<path d="M8.7 69.7h6M8.7 72.7h6M8.7 75.7h6" stroke="#7a7d80" stroke-width="1" fill="none"/>
<path d="M82.7 69.7h6M82.7 72.7h6M82.7 75.7h6" stroke="#7a7d80" stroke-width="1" fill="none"/>
<path d="M82.7 384.5h6M82.7 387.5h6M82.7 390.5h6" stroke="#7a7d80" stroke-width="1" fill="none"/>
<path d="M8.7 551.5h6M8.7 554.5h6M8.7 557.5h6" stroke="#7a7d80" stroke-width="1" fill="none"/>
<path d="M82.7 602.7h6M82.7 605.7h6M82.7 608.7h6" stroke="#7a7d80" stroke-width="1" fill="none"/>
<path d="M33.4 82.7L42.7 74.0Q42.8 71.7 40.5 71.6L31.1 80.2ZM29.9 83.6L32.6 82.9L30.8 81.0Z" fill="#c2c2c2"/>
<path d="M107.0 82.7L116.4 73.6Q116.4 71.2 114.0 71.2L104.7 80.3ZM103.5 83.8L106.2 83.0L104.3 81.1Z" fill="#c2c2c2"/>
<path d="M110.8 77.7H117.4M110.8 80.7H117.4M110.8 83.9H117.4M110.9 77.2V84.4" stroke="#b8b8b8" stroke-width="1.2" fill="none"/>
<path d="M102.4 390.2H117M102.4 395.4H117" stroke="#c0c0c0" stroke-width="1.1" fill="none"/><circle cx="108.3" cy="390.2" r="1.7" fill="#c0c0c0"/><circle cx="113" cy="395.4" r="1.7" fill="#c0c0c0"/>
<path d="M207.6 396.6Q206.6 392 210.6 391Q212 387.6 215.4 388Q218.6 388 220 391Q224 392 222.8 396.6" stroke="#6e6e6e" stroke-width="1" fill="none"/><path d="M210 393.6H220M218 391.6L220.2 393.6L218 395.6M212 391.6L209.8 393.6L212 395.6" stroke="#6e6e6e" stroke-width="1" fill="none"/>
<path d="M33.4 552.4V563M39.2 551.8V563" stroke="#c0c0c0" stroke-width="1.2" fill="none"/><rect x="31.9" y="552.4" width="3" height="5.2" rx="1.2" fill="#c0c0c0"/><circle cx="39.2" cy="558.6" r="2" fill="#c0c0c0"/>
<circle cx="110" cy="610.6" r="6.2" fill="none" stroke="#c0c0c0" stroke-width="1.1"/><rect x="107.4" y="608" width="5.2" height="5.2" rx="0.8" fill="#c0c0c0"/>
<g fill="none" stroke="#6e6e6e" stroke-width="1"><rect x="194.4" y="605" width="13" height="9" rx="1"/><path d="M194.4 609H207.4M198.6 605V609M202.8 609V614" /><rect x="195.4" y="606" width="3" height="2.6" fill="#6e6e6e" stroke="none"/><rect x="203" y="606" width="4" height="2.6" fill="#6e6e6e" stroke="none"/><rect x="195.4" y="610" width="7" height="3.4" fill="#6e6e6e" stroke="none"/><rect x="223" y="605" width="13" height="9" rx="1"/><path d="M226 605V614M233 605V614M223 609.6H236"/><rect x="226.6" y="606" width="5.8" height="3" fill="#6e6e6e" stroke="none"/><rect x="226.6" y="610.4" width="5.8" height="3" fill="#6e6e6e" stroke="none"/><path d="M251.6 614.4L255.6 605.4L258.4 610L260.6 605.4L264.6 614.4Z" fill="#6e6e6e" stroke="none"/></g>
<g fill="none" stroke="#c0c0c0" stroke-width="1" stroke-linejoin="round"><path d="M80 107L82.4 99.4Q84.4 95.6 88.4 94.2L92.8 98.6Q91.4 102.6 87.6 104.6Z"/><path d="M80.4 106.6L86.6 100.4"/><path d="M89.4 92.8L94.2 97.6L96.6 95.2L91.8 90.4Z" fill="#c0c0c0" stroke="none"/></g>
<g fill="none" stroke="#c0c0c0" stroke-width="1.1" stroke-linejoin="round"><path d="M178.4 106L179.4 102.2L185.6 93.6L192 100L183.4 105.2Z"/><path d="M178 106.6L179 103L181.6 105.6Z" fill="#c0c0c0" stroke="none"/><path d="M186.4 93L189.8 89.6L194 93.8L196 95.8L192.6 99.2Z" fill="#c0c0c0" stroke="none"/></g>
<defs><linearGradient id="wg" gradientUnits="userSpaceOnUse" x1="87" y1="0" x2="186" y2="0"><stop offset="0" stop-color="#fff" stop-opacity="0.2"/><stop offset="0.16" stop-color="#fff" stop-opacity="0.85"/><stop offset="0.3" stop-color="#fff"/><stop offset="0.72" stop-color="#fff"/><stop offset="0.9" stop-color="#fff" stop-opacity="0.6"/><stop offset="1" stop-color="#fff" stop-opacity="0.12"/></linearGradient></defs>
<path d="M90.1 128.7L91.3 128.0L92.5 127.3L93.6 126.6L94.7 126.0L95.7 125.4L96.8 124.8L97.7 124.3L98.7 123.8L99.7 123.4L100.6 123.0L101.6 122.6L102.5 122.3L103.5 122.0L104.5 121.8L105.5 121.5L106.5 121.3L107.6 121.1L108.8 121.0L110.0 120.9L111.2 120.8L112.6 120.8L114.0 120.7L115.4 120.7L117.0 120.8L118.6 120.9L120.2 121.1L121.7 121.3L123.3 121.7L124.8 122.1L126.4 122.5L128.0 123.0L129.6 123.5L131.1 124.1L132.7 124.6L134.3 125.2L135.9 125.7L137.5 126.2L139.2 126.7L140.8 127.2L142.5 127.7L144.1 128.1L145.8 128.5L147.4 128.9L149.1 129.2L150.7 129.4L152.4 129.6L154.0 129.7L155.7 129.7L157.2 129.7L158.5 129.6L159.9 129.5L161.2 129.3L162.5 129.1L163.7 128.9L164.8 128.7L166.0 128.4L167.1 128.1L168.2 127.8L169.3 127.4L170.3 127.0L171.3 126.6L172.4 126.2L173.4 125.7L174.4 125.2L175.4 124.7L176.4 124.1L177.4 123.5L178.4 122.9L179.5 122.3L180.5 121.7L181.6 121.0L182.7 120.3L182.5 120.1L181.4 120.7L180.3 121.3L179.2 121.9L178.2 122.5L177.1 123.1L176.1 123.6L175.1 124.1L174.1 124.6L173.1 125.0L172.1 125.4L171.0 125.8L170.0 126.2L169.0 126.6L167.9 126.9L166.9 127.2L165.8 127.4L164.6 127.6L163.5 127.8L162.3 128.0L161.1 128.1L159.8 128.2L158.5 128.3L157.1 128.3L155.7 128.3L154.1 128.2L152.5 128.1L151.0 127.8L149.4 127.5L147.8 127.1L146.2 126.7L144.7 126.2L143.1 125.6L141.5 125.1L139.9 124.5L138.4 123.9L136.8 123.3L135.2 122.7L133.6 122.2L131.9 121.6L130.3 121.1L128.6 120.7L127.0 120.3L125.3 120.0L123.7 119.7L122.0 119.4L120.3 119.3L118.7 119.2L117.0 119.2L115.4 119.3L113.9 119.4L112.5 119.5L111.1 119.6L109.9 119.7L108.6 119.9L107.5 120.1L106.3 120.3L105.3 120.5L104.2 120.8L103.2 121.1L102.2 121.5L101.3 121.9L100.3 122.3L99.4 122.7L98.4 123.2L97.4 123.7L96.5 124.3L95.5 124.9L94.4 125.5L93.4 126.2L92.3 126.9L91.1 127.7L89.9 128.5Z" fill="url(#wg)" opacity="1"/>
<path d="M88.4 163.4L89.6 162.7L90.8 162.0L92.0 161.3L93.1 160.6L94.3 160.0L95.3 159.4L96.4 158.8L97.5 158.3L98.5 157.8L99.6 157.3L100.6 156.9L101.7 156.5L102.8 156.1L103.9 155.8L105.0 155.5L106.1 155.2L107.3 155.0L108.5 154.8L109.8 154.6L111.1 154.5L112.5 154.4L113.9 154.4L115.4 154.4L117.0 154.4L118.6 154.6L120.1 154.8L121.7 155.1L123.2 155.6L124.8 156.1L126.3 156.6L127.8 157.1L129.4 157.6L131.0 158.1L132.6 158.5L134.2 158.9L135.9 159.3L137.6 159.7L139.2 160.1L140.9 160.6L142.5 161.0L144.2 161.4L145.8 161.8L147.4 162.2L149.1 162.5L150.7 162.7L152.4 162.9L154.0 163.1L155.7 163.1L157.2 163.0L158.6 163.0L159.9 162.8L161.3 162.6L162.5 162.4L163.8 162.2L165.0 161.9L166.2 161.5L167.3 161.2L168.5 160.8L169.6 160.3L170.6 159.8L171.7 159.4L172.8 158.8L173.8 158.3L174.8 157.7L175.9 157.1L176.9 156.5L177.9 155.9L179.0 155.3L180.0 154.6L181.1 153.9L182.2 153.2L183.3 152.5L183.1 152.3L182.0 152.9L180.9 153.5L179.8 154.2L178.7 154.8L177.6 155.4L176.6 156.0L175.5 156.5L174.5 157.1L173.4 157.6L172.4 158.1L171.3 158.6L170.3 159.0L169.2 159.4L168.1 159.8L167.0 160.2L165.9 160.5L164.7 160.8L163.5 161.0L162.3 161.2L161.1 161.4L159.8 161.6L158.5 161.7L157.1 161.7L155.7 161.7L154.1 161.7L152.5 161.5L150.9 161.3L149.4 161.0L147.8 160.7L146.2 160.2L144.6 159.8L143.0 159.3L141.5 158.7L139.9 158.0L138.4 157.4L136.8 156.7L135.3 156.0L133.7 155.3L132.1 154.7L130.5 154.1L128.8 153.7L127.1 153.4L125.4 153.1L123.7 152.9L122.0 152.8L120.3 152.7L118.7 152.7L117.0 152.8L115.4 152.9L113.9 153.0L112.4 153.1L111.0 153.2L109.6 153.4L108.3 153.6L107.1 153.9L105.9 154.2L104.7 154.5L103.6 154.8L102.5 155.2L101.4 155.6L100.3 156.1L99.2 156.5L98.2 157.1L97.1 157.6L96.1 158.2L95.0 158.8L93.9 159.4L92.8 160.1L91.7 160.8L90.6 161.6L89.4 162.4L88.2 163.2Z" fill="url(#wg)" opacity="1"/>
<path d="M88.4 196.5L89.6 195.8L90.8 195.0L92.0 194.4L93.1 193.7L94.2 193.1L95.3 192.5L96.4 191.9L97.5 191.4L98.5 190.9L99.6 190.4L100.6 190.0L101.7 189.6L102.8 189.2L103.9 188.9L105.0 188.6L106.1 188.3L107.3 188.1L108.5 187.9L109.8 187.7L111.1 187.6L112.5 187.5L113.9 187.4L115.4 187.4L117.0 187.5L118.6 187.6L120.1 187.9L121.7 188.2L123.2 188.6L124.8 189.1L126.3 189.7L127.8 190.2L129.4 190.7L131.0 191.2L132.6 191.6L134.3 192.0L135.9 192.4L137.6 192.8L139.2 193.2L140.9 193.6L142.5 194.0L144.2 194.5L145.8 194.9L147.4 195.2L149.1 195.5L150.7 195.8L152.4 196.0L154.0 196.1L155.7 196.1L157.2 196.1L158.6 196.0L159.9 195.9L161.3 195.7L162.5 195.5L163.8 195.2L165.0 194.9L166.2 194.6L167.3 194.2L168.4 193.8L169.5 193.4L170.6 192.9L171.7 192.4L172.8 191.9L173.8 191.4L174.8 190.8L175.9 190.2L176.9 189.6L177.9 189.0L179.0 188.3L180.0 187.7L181.1 187.0L182.2 186.3L183.3 185.6L183.1 185.4L182.0 186.0L180.9 186.6L179.8 187.3L178.7 187.9L177.7 188.5L176.6 189.1L175.5 189.6L174.5 190.2L173.5 190.7L172.4 191.2L171.4 191.7L170.3 192.1L169.2 192.5L168.1 192.9L167.0 193.3L165.9 193.6L164.7 193.9L163.6 194.2L162.3 194.4L161.1 194.6L159.8 194.7L158.5 194.8L157.1 194.9L155.7 194.9L154.1 194.8L152.5 194.7L150.9 194.4L149.4 194.2L147.8 193.8L146.2 193.4L144.6 192.9L143.0 192.4L141.5 191.8L139.9 191.2L138.3 190.5L136.8 189.8L135.2 189.1L133.7 188.4L132.1 187.8L130.4 187.3L128.8 186.8L127.1 186.5L125.4 186.2L123.7 186.1L122.0 186.0L120.3 185.9L118.7 185.9L117.0 185.9L115.4 186.0L113.9 186.1L112.4 186.2L111.0 186.4L109.6 186.6L108.3 186.8L107.1 187.0L105.9 187.3L104.7 187.6L103.6 187.9L102.5 188.3L101.4 188.7L100.3 189.2L99.2 189.7L98.2 190.2L97.1 190.7L96.1 191.3L95.0 191.9L93.9 192.5L92.9 193.2L91.7 193.9L90.6 194.7L89.4 195.5L88.2 196.3Z" fill="url(#wg)" opacity="1"/>
<path d="M87.8 229.6L89.1 229.0L90.3 228.3L91.5 227.7L92.7 227.1L93.8 226.5L95.0 225.9L96.1 225.4L97.2 224.9L98.3 224.5L99.3 224.1L100.4 223.7L101.5 223.4L102.6 223.0L103.7 222.8L104.9 222.5L106.1 222.3L107.3 222.1L108.5 222.0L109.8 221.8L111.1 221.7L112.5 221.7L113.9 221.6L115.4 221.6L117.0 221.7L118.6 221.7L120.1 221.9L121.7 222.1L123.2 222.4L124.8 222.7L126.4 223.1L127.9 223.5L129.5 223.9L131.1 224.3L132.7 224.8L134.3 225.3L135.9 225.8L137.5 226.2L139.1 226.7L140.7 227.1L142.4 227.6L144.0 228.0L145.7 228.3L147.3 228.6L149.0 228.9L150.7 229.1L152.3 229.3L154.0 229.4L155.7 229.4L157.2 229.3L158.6 229.2L160.0 229.1L161.4 229.0L162.7 228.8L164.0 228.5L165.3 228.3L166.6 227.9L167.8 227.6L169.0 227.2L170.2 226.8L171.4 226.4L172.5 226.0L173.6 225.5L174.8 225.0L175.9 224.4L177.0 223.8L178.0 223.3L179.1 222.6L180.2 222.0L181.3 221.3L182.4 220.6L183.4 219.9L184.5 219.1L184.3 218.9L183.1 219.4L182.0 220.0L180.8 220.6L179.7 221.1L178.6 221.6L177.5 222.1L176.4 222.6L175.3 223.1L174.1 223.6L173.0 224.0L171.9 224.4L170.8 224.7L169.6 225.1L168.5 225.4L167.3 225.7L166.1 225.9L164.9 226.2L163.7 226.4L162.4 226.5L161.1 226.6L159.8 226.7L158.5 226.8L157.1 226.8L155.7 226.8L154.1 226.7L152.6 226.6L151.0 226.4L149.5 226.1L147.9 225.8L146.3 225.4L144.8 225.0L143.2 224.6L141.6 224.1L140.0 223.6L138.4 223.1L136.8 222.6L135.2 222.1L133.6 221.7L132.0 221.2L130.3 220.7L128.7 220.3L127.1 220.0L125.4 219.6L123.7 219.4L122.1 219.2L120.4 219.0L118.7 218.9L117.0 218.9L115.4 219.0L113.8 219.1L112.3 219.2L110.9 219.3L109.5 219.5L108.2 219.7L106.9 220.0L105.6 220.2L104.4 220.5L103.2 220.9L102.1 221.2L100.9 221.6L99.8 222.1L98.7 222.6L97.6 223.1L96.5 223.6L95.5 224.2L94.4 224.8L93.3 225.4L92.2 226.1L91.1 226.9L89.9 227.6L88.8 228.5L87.6 229.4Z" fill="url(#wg)" opacity="1"/>
<path d="M86.6 263.5L88.0 262.9L89.2 262.2L90.4 261.5L91.6 260.9L92.8 260.2L94.0 259.6L95.2 259.1L96.3 258.5L97.5 258.0L98.6 257.5L99.8 257.0L100.9 256.6L102.1 256.2L103.3 255.9L104.5 255.5L105.8 255.3L107.0 255.0L108.3 254.8L109.7 254.6L111.0 254.4L112.5 254.3L113.9 254.3L115.4 254.2L117.0 254.2L118.6 254.3L120.1 254.4L121.7 254.7L123.3 254.9L124.8 255.2L126.4 255.6L128.0 256.0L129.6 256.5L131.2 256.9L132.8 257.4L134.4 257.9L136.0 258.4L137.6 258.9L139.2 259.4L140.8 259.9L142.4 260.4L144.1 260.8L145.7 261.2L147.4 261.5L149.0 261.8L150.7 262.1L152.3 262.2L154.0 262.4L155.7 262.4L157.2 262.3L158.7 262.3L160.1 262.1L161.5 261.9L162.9 261.7L164.3 261.4L165.7 261.1L167.0 260.8L168.3 260.4L169.6 260.0L170.9 259.5L172.2 259.0L173.4 258.5L174.7 258.0L175.9 257.4L177.1 256.8L178.3 256.2L179.4 255.6L180.6 254.9L181.7 254.3L182.9 253.6L184.0 252.9L185.1 252.1L186.1 251.3L185.9 250.9L184.7 251.4L183.5 252.0L182.3 252.6L181.1 253.2L180.0 253.8L178.8 254.4L177.6 254.9L176.4 255.5L175.2 256.0L174.0 256.5L172.8 257.0L171.6 257.4L170.3 257.8L169.1 258.2L167.8 258.6L166.5 258.9L165.2 259.2L163.9 259.5L162.6 259.7L161.2 259.9L159.9 260.1L158.5 260.2L157.1 260.2L155.7 260.2L154.1 260.2L152.6 260.0L151.0 259.8L149.4 259.6L147.8 259.2L146.3 258.9L144.7 258.4L143.1 258.0L141.5 257.5L139.9 257.0L138.3 256.5L136.7 256.0L135.1 255.5L133.5 254.9L131.9 254.5L130.3 254.0L128.6 253.5L127.0 253.1L125.3 252.8L123.7 252.5L122.0 252.3L120.4 252.1L118.7 252.0L117.0 252.0L115.4 252.0L113.8 252.1L112.3 252.2L110.8 252.4L109.4 252.6L108.0 252.8L106.6 253.1L105.3 253.4L104.0 253.7L102.8 254.1L101.5 254.5L100.3 255.0L99.1 255.5L97.9 256.0L96.8 256.5L95.6 257.1L94.5 257.7L93.3 258.4L92.2 259.1L91.0 259.8L89.9 260.5L88.7 261.3L87.5 262.1L86.4 263.1Z" fill="url(#wg)" opacity="1"/>
<path d="M87.8 295.5L89.0 294.8L90.3 294.1L91.4 293.3L92.6 292.7L93.7 292.1L94.8 291.5L96.0 291.0L97.0 290.4L98.1 290.0L99.2 289.4L100.3 289.0L101.4 288.7L102.6 288.5L103.6 287.9L104.8 287.6L106.0 287.6L107.2 287.5L108.5 287.2L109.7 286.9L111.1 287.2L112.5 286.6L113.9 287.0L115.4 286.7L117.0 286.7L118.6 286.8L120.1 287.2L121.6 287.9L123.2 287.8L124.7 288.5L126.2 289.0L127.8 289.3L129.3 290.0L131.0 290.1L132.6 290.6L134.2 291.2L135.7 292.1L137.4 292.3L139.1 292.6L140.7 293.2L142.4 293.5L144.1 293.8L145.6 294.5L147.3 294.7L149.1 294.6L150.7 295.1L152.4 295.2L154.0 295.5L155.7 295.4L157.2 295.1L158.6 295.4L159.9 294.8L161.3 294.8L162.6 294.8L163.8 294.2L165.1 294.1L166.3 293.7L167.5 293.6L168.7 293.3L169.8 292.8L171.0 292.5L172.0 291.9L173.2 291.5L174.2 291.0L175.3 290.5L176.4 289.9L177.5 289.4L178.5 288.8L179.6 288.1L180.6 287.5L181.7 286.8L182.8 286.1L183.9 285.4L183.7 285.2L182.6 285.8L181.5 286.4L180.3 287.0L179.3 287.6L178.1 288.1L177.1 288.6L176.0 289.2L174.9 289.7L173.8 290.1L172.7 290.5L171.7 291.0L170.5 291.3L169.5 291.7L168.3 292.0L167.2 292.3L166.1 292.8L164.9 292.9L163.7 293.2L162.4 293.1L161.1 293.4L159.9 293.7L158.5 293.3L157.1 293.7L155.7 293.4L154.1 293.2L152.6 293.3L151.0 293.0L149.4 292.9L147.9 292.2L146.3 291.7L144.7 291.5L143.2 290.8L141.7 290.1L140.0 289.7L138.5 289.0L137.0 288.1L135.3 287.9L133.7 287.4L132.0 286.9L130.5 286.1L128.8 285.8L127.2 285.2L125.5 285.0L123.7 285.1L122.1 284.5L120.4 284.8L118.7 284.9L117.0 284.9L115.4 284.9L113.8 284.7L112.4 285.3L110.9 285.0L109.6 285.5L108.2 285.6L106.9 285.7L105.7 286.2L104.5 286.7L103.4 287.0L102.1 287.1L101.0 287.7L100.0 288.3L98.9 288.7L97.7 289.1L96.7 289.8L95.6 290.3L94.5 290.9L93.4 291.5L92.3 292.2L91.2 293.0L90.0 293.7L88.8 294.5L87.6 295.3Z" fill="url(#wg)" opacity="1"/>
<path d="M88.4 329.0L89.6 328.3L90.8 327.6L92.0 326.8L93.1 326.2L94.2 325.6L95.3 325.0L96.4 324.4L97.4 323.9L98.5 323.4L99.5 322.9L100.6 322.5L101.7 322.1L102.8 321.8L103.8 321.4L105.0 321.1L106.1 320.9L107.3 320.8L108.5 320.5L109.8 320.3L111.1 320.4L112.5 320.0L113.9 320.2L115.4 320.0L117.0 320.0L118.6 320.1L120.1 320.4L121.7 320.9L123.3 321.0L124.8 321.6L126.3 322.1L127.9 322.5L129.5 323.0L131.1 323.4L132.7 323.9L134.3 324.4L135.9 325.1L137.5 325.4L139.2 325.8L140.8 326.4L142.5 326.7L144.1 327.0L145.7 327.6L147.4 327.9L149.1 328.0L150.7 328.3L152.4 328.5L154.0 328.7L155.7 328.7L157.2 328.5L158.6 328.6L159.9 328.2L161.2 328.2L162.5 328.1L163.8 327.7L165.0 327.5L166.1 327.1L167.3 326.9L168.5 326.6L169.5 326.2L170.6 325.8L171.7 325.3L172.8 324.9L173.8 324.4L174.8 323.8L175.9 323.3L176.9 322.7L178.0 322.1L179.0 321.5L180.0 320.9L181.1 320.2L182.2 319.5L183.3 318.8L183.1 318.6L182.0 319.2L180.9 319.8L179.8 320.4L178.7 321.0L177.6 321.6L176.6 322.1L175.6 322.7L174.5 323.1L173.5 323.6L172.4 324.1L171.4 324.5L170.3 324.8L169.2 325.3L168.1 325.6L167.0 325.9L165.9 326.3L164.7 326.4L163.6 326.7L162.3 326.8L161.1 327.0L159.8 327.2L158.5 327.0L157.1 327.3L155.7 327.1L154.1 327.0L152.5 327.0L151.0 326.7L149.4 326.5L147.8 326.0L146.3 325.5L144.6 325.2L143.1 324.6L141.5 324.0L139.9 323.5L138.4 322.8L136.8 322.1L135.2 321.7L133.6 321.2L132.0 320.7L130.4 320.0L128.7 319.7L127.1 319.2L125.4 318.9L123.7 318.8L122.0 318.4L120.3 318.5L118.7 318.5L117.0 318.6L115.4 318.6L113.9 318.5L112.4 318.9L111.0 318.8L109.6 319.1L108.3 319.3L107.1 319.4L105.9 319.8L104.7 320.2L103.6 320.5L102.4 320.8L101.4 321.3L100.3 321.8L99.3 322.2L98.2 322.7L97.1 323.3L96.1 323.8L95.0 324.4L93.9 325.1L92.8 325.7L91.7 326.5L90.6 327.2L89.4 328.0L88.2 328.8Z" fill="url(#wg)" opacity="1"/>
<g fill="none" stroke="#c0c0c0" stroke-width="1" stroke-linejoin="round" stroke-linecap="round">
<path d="M84 368.4H83.2Q82 368.4 82 367.2V358.4" stroke="none"/>
<rect x="81.6" y="356.6" width="10.6" height="10.6" rx="1.6"/><path d="M84 361.4L86.4 364L90.2 358.8"/><path d="M94.6 360V367.6Q94.6 369.4 92.8 369.4H85" />
<rect x="199.8" y="358" width="12" height="11.6" rx="1.8"/><path d="M205.8 358.6V366M202.8 363.2L205.8 366.2L208.8 363.2"/>
<rect x="229.4" y="359.8" width="9.6" height="9.6" rx="1.6"/><path d="M226 366.4Q225 366.2 225 365V358.2Q225 356.8 226.6 356.8H233.4Q235 356.8 235.2 358"/><path d="M234.2 362V367.2M231.6 364.6H236.8"/>
<path d="M254.4 360V368Q254.4 369.8 256.2 369.8H261.8Q263.6 369.8 263.6 368V360M253.4 359.6H264.6M256.8 359.4Q257 357 259 357Q261 357 261.2 359.4"/><path d="M257 362V367.4M259 362V367.4M261 362V367.4" stroke-width="0.7" stroke="#a0a0a0"/>
</g>
<path d="M97.5 427.6L97.8 427.4L98.1 427.2L98.5 426.9L98.9 426.5L99.4 426.2L100.0 425.8L100.5 425.4L101.2 425.0L101.9 424.5L102.6 424.1L103.4 423.6L104.3 423.1L105.3 422.5L106.3 421.9L107.3 421.3L108.4 420.7L109.5 420.1L110.6 419.6L111.7 419.0L112.7 418.6L113.7 418.1L114.8 417.6L115.8 417.2L116.8 416.8L117.8 416.4L118.8 416.0L119.9 415.6L120.9 415.3L121.9 415.0L122.9 414.7L123.9 414.4L124.9 414.1L125.9 413.9L126.9 413.6L127.9 413.4L128.9 413.2L129.9 413.1L130.9 412.9L131.9 412.8L133.0 412.7L134.0 412.6L135.0 412.5L136.0 412.5L137.0 412.5L138.0 412.4L139.0 412.5L140.0 412.5L141.0 412.5L142.1 412.6L143.1 412.6L144.1 412.7L145.1 412.8L146.1 412.9L147.1 413.0L148.1 413.2L149.1 413.3L150.0 413.5L151.0 413.7L152.0 413.9L153.0 414.1L154.0 414.4L155.0 414.6L156.0 414.9L157.0 415.2L158.0 415.5L159.0 415.8L160.0 416.2L161.1 416.5L162.1 416.9L163.1 417.2L164.1 417.6L165.0 418.0L166.0 418.4L167.0 418.8L168.0 419.2L169.0 419.7L170.0 420.1L171.0 420.5L172.0 421.0L173.1 421.4L174.2 421.8L175.3 422.2L176.5 422.7L177.6 423.1L178.8 423.5L180.0 424.0L181.2 424.4L182.4 424.8L183.6 425.1L184.8 425.4L186.0 425.7L187.2 426.0L188.4 426.3L189.7 426.5L190.9 426.8L192.1 427.0L193.3 427.1L194.6 427.3L195.8 427.4L196.9 427.5L198.1 427.6L199.2 427.7L200.3 427.8L201.4 427.8L202.5 427.8L203.6 427.8L204.7 427.8L205.8 427.7L206.9 427.6L208.0 427.5L209.2 427.3L210.4 427.2L211.6 427.0L212.8 426.7L214.0 426.5L215.2 426.2L216.5 425.9L217.7 425.6L218.9 425.3L220.1 424.9L221.3 424.6L222.5 424.2L223.7 423.9L224.8 423.5L226.0 423.1L227.2 422.7L228.4 422.2L229.6 421.8L230.8 421.3L232.1 420.8L233.4 420.3L234.8 419.7L236.3 419.1L237.8 418.5L239.3 417.8L240.8 417.2L242.1 416.6L243.3 416.1L244.3 415.7L245.1 415.3L244.9 415.1L244.2 415.4L243.2 415.8L242.0 416.3L240.6 416.9L239.2 417.5L237.7 418.1L236.2 418.7L234.7 419.3L233.2 419.9L231.9 420.4L230.7 420.8L229.4 421.3L228.2 421.7L227.0 422.1L225.8 422.5L224.7 422.9L223.5 423.3L222.3 423.6L221.1 423.9L219.9 424.3L218.7 424.6L217.5 424.9L216.3 425.1L215.1 425.4L213.9 425.6L212.6 425.9L211.5 426.1L210.3 426.3L209.1 426.4L208.0 426.5L206.8 426.6L205.7 426.7L204.6 426.7L203.6 426.7L202.5 426.7L201.4 426.6L200.4 426.6L199.3 426.5L198.2 426.4L197.1 426.3L195.9 426.1L194.8 425.9L193.6 425.7L192.4 425.5L191.2 425.3L190.0 425.0L188.8 424.7L187.6 424.4L186.4 424.1L185.2 423.8L184.1 423.4L182.9 423.0L181.8 422.6L180.6 422.1L179.5 421.7L178.3 421.2L177.2 420.8L176.1 420.3L175.0 419.9L173.9 419.4L172.8 419.0L171.8 418.6L170.8 418.2L169.8 417.7L168.8 417.3L167.8 416.9L166.8 416.5L165.8 416.1L164.8 415.7L163.7 415.4L162.7 415.0L161.7 414.7L160.6 414.4L159.6 414.0L158.6 413.7L157.5 413.5L156.5 413.2L155.4 412.9L154.4 412.7L153.4 412.5L152.3 412.3L151.3 412.1L150.3 412.0L149.3 411.8L148.2 411.7L147.2 411.6L146.2 411.5L145.2 411.5L144.2 411.4L143.1 411.4L142.1 411.3L141.1 411.3L140.1 411.3L139.0 411.3L138.0 411.3L137.0 411.4L135.9 411.4L134.9 411.5L133.9 411.6L132.8 411.7L131.8 411.9L130.8 412.0L129.8 412.2L128.8 412.4L127.8 412.6L126.7 412.8L125.7 413.1L124.7 413.3L123.7 413.6L122.7 413.9L121.7 414.3L120.6 414.6L119.6 415.0L118.6 415.4L117.6 415.8L116.6 416.2L115.5 416.6L114.5 417.1L113.5 417.6L112.5 418.0L111.4 418.6L110.4 419.1L109.3 419.7L108.2 420.3L107.1 420.9L106.1 421.5L105.1 422.1L104.1 422.7L103.2 423.2L102.4 423.7L101.7 424.2L101.0 424.7L100.3 425.1L99.8 425.5L99.2 425.9L98.7 426.3L98.3 426.6L97.9 426.9L97.6 427.2L97.3 427.4Z" fill="#2a2a2a" opacity="1"/>
<rect x="252.6" y="424.4" width="8.4" height="6.4" rx="1" fill="#c0c0c0"/><path d="M250.6 424.6V422.6Q250.8 420 253.2 420Q255.6 420 255.8 422.6V424.4" fill="none" stroke="#c0c0c0" stroke-width="1.2"/>
<path d="M237.2 452.1L241 447.9L244.8 452.1" fill="none" stroke="#b4b4b4" stroke-width="1.2" stroke-linejoin="miter"/>
<path d="M237.2 456.1L241 460.3L244.8 456.1" fill="none" stroke="#b4b4b4" stroke-width="1.2" stroke-linejoin="miter"/>
<path d="M237.2 477.7L241 473.5L244.8 477.7" fill="none" stroke="#b4b4b4" stroke-width="1.2" stroke-linejoin="miter"/>
<path d="M237.2 481.7L241 485.9L244.8 481.7" fill="none" stroke="#b4b4b4" stroke-width="1.2" stroke-linejoin="miter"/>
<path d="M237.2 529.3L241 525.1L244.8 529.3" fill="none" stroke="#b4b4b4" stroke-width="1.2" stroke-linejoin="miter"/>
<path d="M237.2 533.3L241 537.5L244.8 533.3" fill="none" stroke="#b4b4b4" stroke-width="1.2" stroke-linejoin="miter"/>
<path d="M252.1 502.2L255.6 498.2L259.1 502.2" fill="none" stroke="#b4b4b4" stroke-width="1.2" stroke-linejoin="miter"/>
<path d="M252.1 506.6L255.6 510.6L259.1 506.6" fill="none" stroke="#b4b4b4" stroke-width="1.2" stroke-linejoin="miter"/>
<path d="M251.8 449L255.4 452.6L259 449M251.8 453.8L255.4 457.4L259 453.8" fill="none" stroke="#c0c0c0" stroke-width="1.1"/>
<rect x="252" y="475.4" width="7" height="7.4" rx="1.6" fill="none" stroke="#c0c0c0" stroke-width="1"/><path d="M252.6 482.2L258.4 476" stroke="#c0c0c0" stroke-width="1" fill="none"/>
<path d="M180.9 497.9H185.1V499.3H187.2V502.1H189.8V506.5H187.2V509.3H185.1V510.9H180.9V509.3H178.8V506.5H176.2V502.1H178.8V499.3H180.9Z" fill="#bababa"/>
<circle cx="201" cy="504.4" r="6.7" fill="#b8b8b8"/>
<defs><radialGradient id="aa3"><stop offset="0" stop-color="#b4b4b4"/><stop offset="0.7" stop-color="#b4b4b4"/><stop offset="0.78" stop-color="#a4a8b8" stop-opacity="0.9"/><stop offset="1" stop-color="#9aa4c4" stop-opacity="0.25"/></radialGradient><radialGradient id="aa4"><stop offset="0" stop-color="#bababa"/><stop offset="0.36" stop-color="#b6b6b6"/><stop offset="0.44" stop-color="#8e8e8e"/><stop offset="0.64" stop-color="#888888"/><stop offset="0.72" stop-color="#707070"/><stop offset="1" stop-color="#606060" stop-opacity="0"/></radialGradient></defs>
<circle cx="220.9" cy="504.4" r="7.6" fill="url(#aa3)"/>
<circle cx="240.2" cy="504.4" r="8.4" fill="url(#aa4)"/>
<path d="M81.8 555.2H87.6M84.7 552.3V558.1" stroke="#e4e4e4" stroke-width="1.1" fill="none"/>
<path d="M93.6 556.2L96.7 559.3L101.9 552" stroke="#f6f6f6" stroke-width="1.5" fill="none"/>
<g fill="none" stroke="#c0c0c0" stroke-width="1" stroke-linecap="round"><path d="M232.2 574.8A6.5 6.5 0 1 1 227.4 576.8"/><path d="M232.2 574.8V580.6"/><circle cx="232.2" cy="581.4" r="1.6" fill="#c0c0c0" stroke="none"/>
<path d="M254.2 577.4Q252.6 579.6 254.4 581.4Q255.8 582.6 257.6 582L262.2 586.8Q263.4 587.6 264.4 586.6Q265.2 585.6 264.4 584.6L259.8 579.8Q260.4 578 259 576.4Q257.4 575 255.4 575.6L257.6 577.8L256.4 579.4Z" stroke-linejoin="round"/></g>
<g transform="translate(227.5 659.6) rotate(-25)"><rect x="-5" y="-4" width="10" height="8" fill="#00ff15" stroke="#2a2a2a" stroke-width="2.6"/><rect x="-5" y="-4" width="10" height="8" fill="none" stroke="#ffffff" stroke-width="1.3"/></g>
<circle cx="139.5" cy="706.9" r="3.6" fill="#2e2e2e" stroke="#1a1a1a" stroke-width="2.4"/><circle cx="139.5" cy="706.9" r="3.6" fill="none" stroke="#f0f0f0" stroke-width="1.1"/>
<defs><pattern id="ck2" x="78.6" y="755" width="9" height="5.6" patternUnits="userSpaceOnUse"><rect width="9" height="5.6" fill="#fff"/><rect x="4.5" width="4.5" height="2.8" fill="#6e6e6e"/><rect y="2.8" width="4.5" height="2.8" fill="#6e6e6e"/></pattern></defs>
<rect x="78.6" y="755" width="28.2" height="5.8" rx="1" fill="url(#ck2)"/>
<circle cx="255.8" cy="753" r="6.6" fill="none" stroke="#c0c0c0" stroke-width="1"/><path d="M253.6 749.6L259.6 753L253.6 756.4Z" fill="none" stroke="#c0c0c0" stroke-width="1" stroke-linejoin="round"/>
<defs><pattern id="ck3" x="52" y="620" width="3" height="3" patternUnits="userSpaceOnUse"><rect width="3" height="3" fill="#fff"/><rect x="1.5" width="1.5" height="1.5" fill="#8a8a8a"/><rect y="1.5" width="1.5" height="1.5" fill="#8a8a8a"/></pattern><linearGradient id="og" x1="0" x2="0" y1="0" y2="1"><stop offset="0" stop-color="#0c0c0c"/><stop offset="0.15" stop-color="#0c0c0c" stop-opacity="0.95"/><stop offset="1" stop-color="#0c0c0c" stop-opacity="0"/></linearGradient></defs>
<rect x="52" y="618" width="6" height="102.6" rx="3" fill="url(#ck3)"/><rect x="52" y="618" width="6" height="102.6" rx="3" fill="url(#og)"/>
<circle cx="55" cy="611.3" r="9.6" fill="#b4b4b4"/>
<g fill="none" stroke="#b0b0b0" stroke-width="1" stroke-linejoin="round" stroke-linecap="butt">
<path d="M280.6 52.1H294.2M280.6 57H294.2M280.6 61.9H294.2" stroke="#c4c4c4" stroke-width="1.5"/>
<rect x="307.2" y="49.6" width="15" height="14.8" rx="2" stroke="#9c9c9c"/><path d="M310.8 61L318.8 53M315.4 52.6H319.2V56.4M310.4 57.6V61.4H314.2" stroke="#b4b4b4"/>
<path d="M341.4 52.2H335.4Q334 52.2 334 53.6V62.8Q334 64.2 335.4 64.2H346.4Q347.8 64.2 347.8 62.8V57.4" stroke="#b4b4b4" stroke-width="1.1"/>
<path d="M345.1 48.8C346.1 48.4 350.0 48.1 350.6 48.5C351.3 48.9 351.0 51.6 350.7 52.4C350.4 53.2 349.1 55.3 348.3 55.5C347.4 55.7 344.3 54.7 343.7 54.3C343.0 53.9 342.5 52.6 342.6 52.0C342.8 51.3 344.2 49.2 345.1 48.8Z" fill="#c4c4c4" stroke="#c4c4c4" stroke-width="0.8" stroke-linejoin="round"/><path d="M344.6 55.4L340.1 59.4" stroke="#c4c4c4" stroke-width="1.8"/><path d="M340.1 59.4Q338.6 62 337 61Q335.8 59.8 337.2 57.6" stroke="#b8b8b8" stroke-width="1"/>
<path d="M361.3 54.1L366 49.3L370.7 54.1" fill="none" stroke="#b4b4b4" stroke-width="1.3" stroke-linejoin="miter"/>
<path d="M361.3 59.7L366 64.5L370.7 59.7" fill="none" stroke="#b4b4b4" stroke-width="1.3" stroke-linejoin="miter"/>
<rect x="380.6" y="48.7" width="16" height="16.4" rx="2.6" stroke="#a6a6a6" stroke-width="1.1"/>
<path d="M385.8 62.3C386.5 62.1 388.7 61.7 390.0 61.1C391.3 60.6 392.9 59.8 393.7 58.9C394.6 58.1 395.1 56.9 395.0 56.0C395.0 55.0 394.2 53.9 393.2 53.3C392.2 52.7 390.4 52.4 389.1 52.5C387.8 52.7 386.2 53.5 385.2 54.3C384.2 55.1 383.2 56.5 383.0 57.4C382.8 58.3 383.5 59.2 384.1 59.7C384.6 60.1 385.6 60.4 386.5 60.3C387.4 60.2 388.9 59.6 389.7 59.1C390.5 58.5 391.4 57.7 391.5 57.1C391.6 56.6 390.8 55.9 390.1 55.8C389.5 55.7 388.5 56.2 387.8 56.5C387.1 56.9 386.3 57.7 386.0 57.9" stroke="#c0c0c0" stroke-width="1.4" stroke-linecap="round"/>
<circle cx="394.7" cy="50.9" r="2.7" fill="#f04a4e" stroke="none"/>
<path d="M430.4 58.6V50.6Q430.4 48.8 428.6 48.8H420.2Q418.4 48.8 418.4 50.6V60.2L422.4 64.2H425.8M418.4 60.2H422.4V64.2" />
<path d="M418.6 60.4H422.2V64Z" fill="#b0b0b0" stroke="none"/>
<circle cx="430" cy="63.2" r="4.1" fill="#c4c4c4" stroke="none"/><path d="M427.4 63.2H432.6M430 60.6V65.8" stroke="#4b4b4b" stroke-width="1.1"/>
<path d="M444 63V50.8Q444 49.6 445.2 49.6H448.6L450.4 51.6H452.6" /><path d="M452 56Q452.6 52 458 51.8M456.6 49.6L459.2 51.8L456.6 54" />
<path d="M446.8 56.4H461L458 64.2H443.8Z" fill="#c4c4c4" stroke="none"/>
<path d="M476 51.4H474.6L470.6 60.6V64.2H487.8V60.6L483.8 51.4H482.4"/>
<rect x="470.6" y="61" width="17.2" height="3.2" rx="0.8" fill="#c4c4c4" stroke="none"/><path d="M479.2 48.2V57M476.2 54.2L479.2 57.2L482.2 54.2" stroke="#c4c4c4" stroke-width="1.1"/>
<path d="M497.8 54.1L502.5 49.3L507.2 54.1" fill="none" stroke="#b4b4b4" stroke-width="1.3" stroke-linejoin="miter"/>
<path d="M497.8 59.7L502.5 64.5L507.2 59.7" fill="none" stroke="#b4b4b4" stroke-width="1.3" stroke-linejoin="miter"/>
<path d="M530.6 52.8H536Q540.4 53 540.4 57.8Q540.2 62.6 536 62.8H526.4" stroke="#c4c4c4" stroke-width="1.5"/><path d="M525.4 52.6L531.2 48.8V56.4Z" fill="#c4c4c4" stroke="none"/>
<path d="M562.4 52.8H557.4Q553.2 53 553.2 57.8Q553.4 62.6 557.4 62.8H567" stroke="#7c7c7c" stroke-width="1.4"/><path d="M567.6 52.6L561.8 48.8V56.4Z" fill="#7c7c7c" stroke="none"/>
<path d="M600.42 58.25L603.90 59.18M599.08 60.58L601.62 63.12M596.75 61.92L597.68 65.40M594.05 61.92L593.12 65.40M591.72 60.58L589.18 63.12M590.38 58.25L586.90 59.18M590.38 55.55L586.90 54.62M591.72 53.22L589.18 50.68M594.05 51.88L593.12 48.40M596.75 51.88L597.68 48.40M599.08 53.22L601.62 50.68M600.42 55.55L603.90 54.62" stroke="#d4d4d4" stroke-width="1.4"/>
<rect x="615.8" y="49.8" width="10.8" height="10.8" stroke="#6f6f6f" stroke-dasharray="1.4 1" />
<path d="M625.70 54.02L626.80 52.11M627.38 55.70L629.29 54.60M628.00 58.00L630.20 58.00M627.38 60.30L629.29 61.40M625.70 61.98L626.80 63.89M623.40 62.60L623.40 64.80M621.10 61.98L620.00 63.89M619.42 60.30L617.51 61.40" stroke="#6f6f6f" stroke-width="1"/>
<path d="M643.6 54.6L650.2 48.9L659.6 57.6L652.6 64.8Z" stroke="#c4c4c4"/><path d="M643.8 54.8H656.4L659.6 57.6L652.6 64.8L644.6 57.6Z" fill="#c4c4c4" stroke="#c4c4c4" stroke-width="0.8"/><path d="M645 54.4Q642 55.4 641.8 59.2Q642 62 643.2 62Q644.4 62 644.6 59.6V55.6Z" fill="#c4c4c4" stroke="none"/>
<rect x="671.4" y="52.4" width="13" height="11.4" stroke="#b4b4b4"/><path d="M677.9 52.4V49.6" stroke="#b4b4b4"/>
<rect x="670.3" y="51.3" width="2.2" height="2.2" rx="0.4" fill="#c4c4c4" stroke="none"/>
<rect x="676.8" y="51.3" width="2.2" height="2.2" rx="0.4" fill="#c4c4c4" stroke="none"/>
<rect x="683.3" y="51.3" width="2.2" height="2.2" rx="0.4" fill="#c4c4c4" stroke="none"/>
<rect x="670.3" y="57.0" width="2.2" height="2.2" rx="0.4" fill="#c4c4c4" stroke="none"/>
<rect x="683.3" y="57.0" width="2.2" height="2.2" rx="0.4" fill="#c4c4c4" stroke="none"/>
<rect x="670.3" y="62.7" width="2.2" height="2.2" rx="0.4" fill="#c4c4c4" stroke="none"/>
<rect x="676.8" y="62.7" width="2.2" height="2.2" rx="0.4" fill="#c4c4c4" stroke="none"/>
<rect x="683.3" y="62.7" width="2.2" height="2.2" rx="0.4" fill="#c4c4c4" stroke="none"/>
<rect x="676.8" y="47.9" width="2.2" height="2.2" rx="0.4" fill="#c4c4c4" stroke="none"/>
<rect x="706" y="49.8" width="14.2" height="14" stroke="#6f6f6f" stroke-dasharray="1.4 1.4"/><path d="M704.6 48.6L721.4 64.8" stroke="#6f6f6f" stroke-width="1.1"/>
<path d="M747.4 49.8H733.4V63.8M733.4 63.8L747.4 49.8" stroke="#6f6f6f" stroke-dasharray="1.4 1.4"/><path d="M747.8 52.6V64H736.4Z" fill="#6f6f6f" stroke="none"/>
<rect x="760.8" y="49.8" width="14.6" height="14.2" rx="2.4" stroke="#6f6f6f"/><rect x="763" y="52" width="10.2" height="9.8" rx="1" stroke="#6f6f6f" stroke-dasharray="1 1.2" stroke-width="0.9"/>
<path d="M795.8 51V63.8H808" stroke="#b0b0b0" stroke-width="1.3"/><path d="M795.8 51L808.6 63.8" stroke="#8c8c8c" stroke-width="0.9"/><path d="M804.6 55L811 48.8" stroke="#c4c4c4" stroke-width="2.1" stroke-linecap="round"/><path d="M802.6 57.2L804.2 54.6L805.2 55.6Z" fill="#c4c4c4" stroke="#c4c4c4" stroke-width="0.5"/>
<path d="M822.2 57.6H838.4" stroke="#8c8c8c" stroke-width="0.9"/><path d="M822.2 57.6Q822.6 64.4 830.4 64.8" stroke="#b0b0b0" stroke-width="1.3"/><path d="M830.4 64.8Q838 64.4 838.4 57.6" stroke="#8c8c8c" stroke-width="0.9"/><path d="M832.6 55L839 48.8" stroke="#c4c4c4" stroke-width="2.1" stroke-linecap="round"/><path d="M830.6 57.2L832.2 54.6L833.2 55.6Z" fill="#c4c4c4" stroke="#c4c4c4" stroke-width="0.5"/>
<path d="M850 57.9H866.6M850 63.2H866.6M852.4 51V65.6M861.4 55.6V65.6" stroke="#7c7c7c" stroke-width="0.7"/><path d="M857.4 57.9H852.4V63.2H866.4" stroke="#b0b0b0" stroke-width="1.3"/><path d="M860.2 55L866.6 48.8" stroke="#c4c4c4" stroke-width="2.1" stroke-linecap="round"/><path d="M858.2 57.2L859.8 54.6L860.8 55.6Z" fill="#c4c4c4" stroke="#c4c4c4" stroke-width="0.5"/>
<rect x="887.4" y="47.2" width="12" height="18.8" rx="1.6" stroke="#b0b0b0" stroke-width="1.1"/><rect x="888" y="61.8" width="10.8" height="3.6" fill="#c4c4c4" stroke="none"/>
<rect x="889.6" y="49.6" width="1.5" height="1.5" fill="#c4c4c4" stroke="none"/>
<rect x="892.5" y="49.6" width="1.5" height="1.5" fill="#c4c4c4" stroke="none"/>
<rect x="895.4" y="49.6" width="1.5" height="1.5" fill="#c4c4c4" stroke="none"/>
<rect x="889.6" y="52.5" width="1.5" height="1.5" fill="#c4c4c4" stroke="none"/>
<rect x="892.5" y="52.5" width="1.5" height="1.5" fill="#c4c4c4" stroke="none"/>
<rect x="895.4" y="52.5" width="1.5" height="1.5" fill="#c4c4c4" stroke="none"/>
<rect x="889.6" y="55.4" width="1.5" height="1.5" fill="#c4c4c4" stroke="none"/>
<rect x="892.5" y="55.4" width="1.5" height="1.5" fill="#c4c4c4" stroke="none"/>
<rect x="895.4" y="55.4" width="1.5" height="1.5" fill="#c4c4c4" stroke="none"/>
<rect x="889.6" y="58.3" width="1.5" height="1.5" fill="#c4c4c4" stroke="none"/>
<path d="M932.6 50.4Q929.4 48.8 925.8 50.2Q921.6 52.2 921.6 56.6Q921.8 59.6 924 61.4L922.6 65L926.8 63.4Q931.4 64.6 934.4 61.2Q936 59 935.6 55.6" stroke="#b0b0b0" stroke-width="1.1"/><path d="M933 52.4L937.4 48.4M934 48.2H937.6V51.8" stroke="#b0b0b0" stroke-width="1"/>
</g>
<text x="928.4" y="61" text-anchor="middle" font-family="'Liberation Sans',sans-serif" font-size="11" font-weight="bold" fill="#c4c4c4">?</text>
<g fill="none" stroke="#b4b4b4" stroke-width="1.2" stroke-linejoin="round" stroke-linecap="round">
<circle cx="1003.1" cy="80.3" r="7.5" stroke-width="1.3"/><path d="M1003 81L1010.6 87.6" stroke-width="1.6"/><path d="M1000.9 78.9L1005.2 79.6L1001.6 83.2Z" fill="#c4c4c4" stroke="#c4c4c4" stroke-width="0.6"/>
<path d="M995.2 126.6V114.6Q995.2 113.6 996.2 113.6H1001L1002.6 115.6H1010.2Q1011.2 115.6 1011.2 116.6V126.6Q1011.2 127.6 1010.2 127.6H996.2Q995.2 127.6 995.2 126.6Z"/><path d="M995.4 114H1001.6V115.4H995.4Z" fill="#b4b4b4" stroke="none"/>
<defs><pattern id="ck4" x="997.6" y="117" width="3.6" height="3.6" patternUnits="userSpaceOnUse" patternTransform="rotate(35 1003 121)"><rect width="3.6" height="3.6" fill="#4b4b4b"/><rect width="1.8" height="1.8" fill="#b8b8b8"/><rect x="1.8" y="1.8" width="1.8" height="1.8" fill="#9a9a9a"/></pattern></defs>
<rect x="997.8" y="117.2" width="10.6" height="8.6" fill="url(#ck4)" stroke="none"/>
<path d="M1003 152L1010 156.3L1003 160.7L996 156.3ZM996 159.8L1002.6 164M996 163.4L1002.6 167.8M996 156.3V163.4M1010 156.3V158.6"/>
<circle cx="1005.7" cy="163.1" r="1.6" stroke-width="0.9"/><circle cx="1010.6" cy="163.1" r="1.8" fill="#a4a4a4" stroke="none"/><path d="M1004.3 166.6L1007.1 169.4M1007.1 166.6L1004.3 169.4" stroke="#9c9c9c" stroke-width="0.9"/><rect x="1009.2" y="166.4" width="3.2" height="3.2" stroke-width="0.9"/>
<path d="M1003 184.2L1010 188.5L1003 192.9L996 188.5ZM996 192L1003 196.6L1010 192M996 195.6L1003 200.4L1010 195.6M996 188.5V195.6M1010 188.5V195.6"/>
</g>
<circle cx="988.8" cy="720.5" r="23.6" fill="#3c3c3c" stroke="#b8b8b8" stroke-width="1.3"/>
<g fill="none" stroke="#c4c4c4" stroke-width="1.4" stroke-linejoin="round"><rect x="983.6" y="712.4" width="10.6" height="16.6" rx="1.6" stroke-width="1.3"/><path d="M984.2 728.4V713H993.6Z" fill="#c4c4c4" stroke="none"/>
<path d="M977.9 715.4V713.6A6.8 6.8 0 0 1 984.7 706.8H993.2A6.8 6.8 0 0 1 1000 713.6V716.4"/><path d="M1000.1 726.8V728A6.8 6.8 0 0 1 993.3 734.8H984.7A6.8 6.8 0 0 1 977.9 728V724.8"/>
<path d="M973.8 715.4H982L977.9 720.8Z" fill="#c4c4c4" stroke="none"/><path d="M996 726.8H1004.2L1000.1 721.2Z" fill="#c4c4c4" stroke="none"/></g>
</svg>
</div>
</body>
</html>
